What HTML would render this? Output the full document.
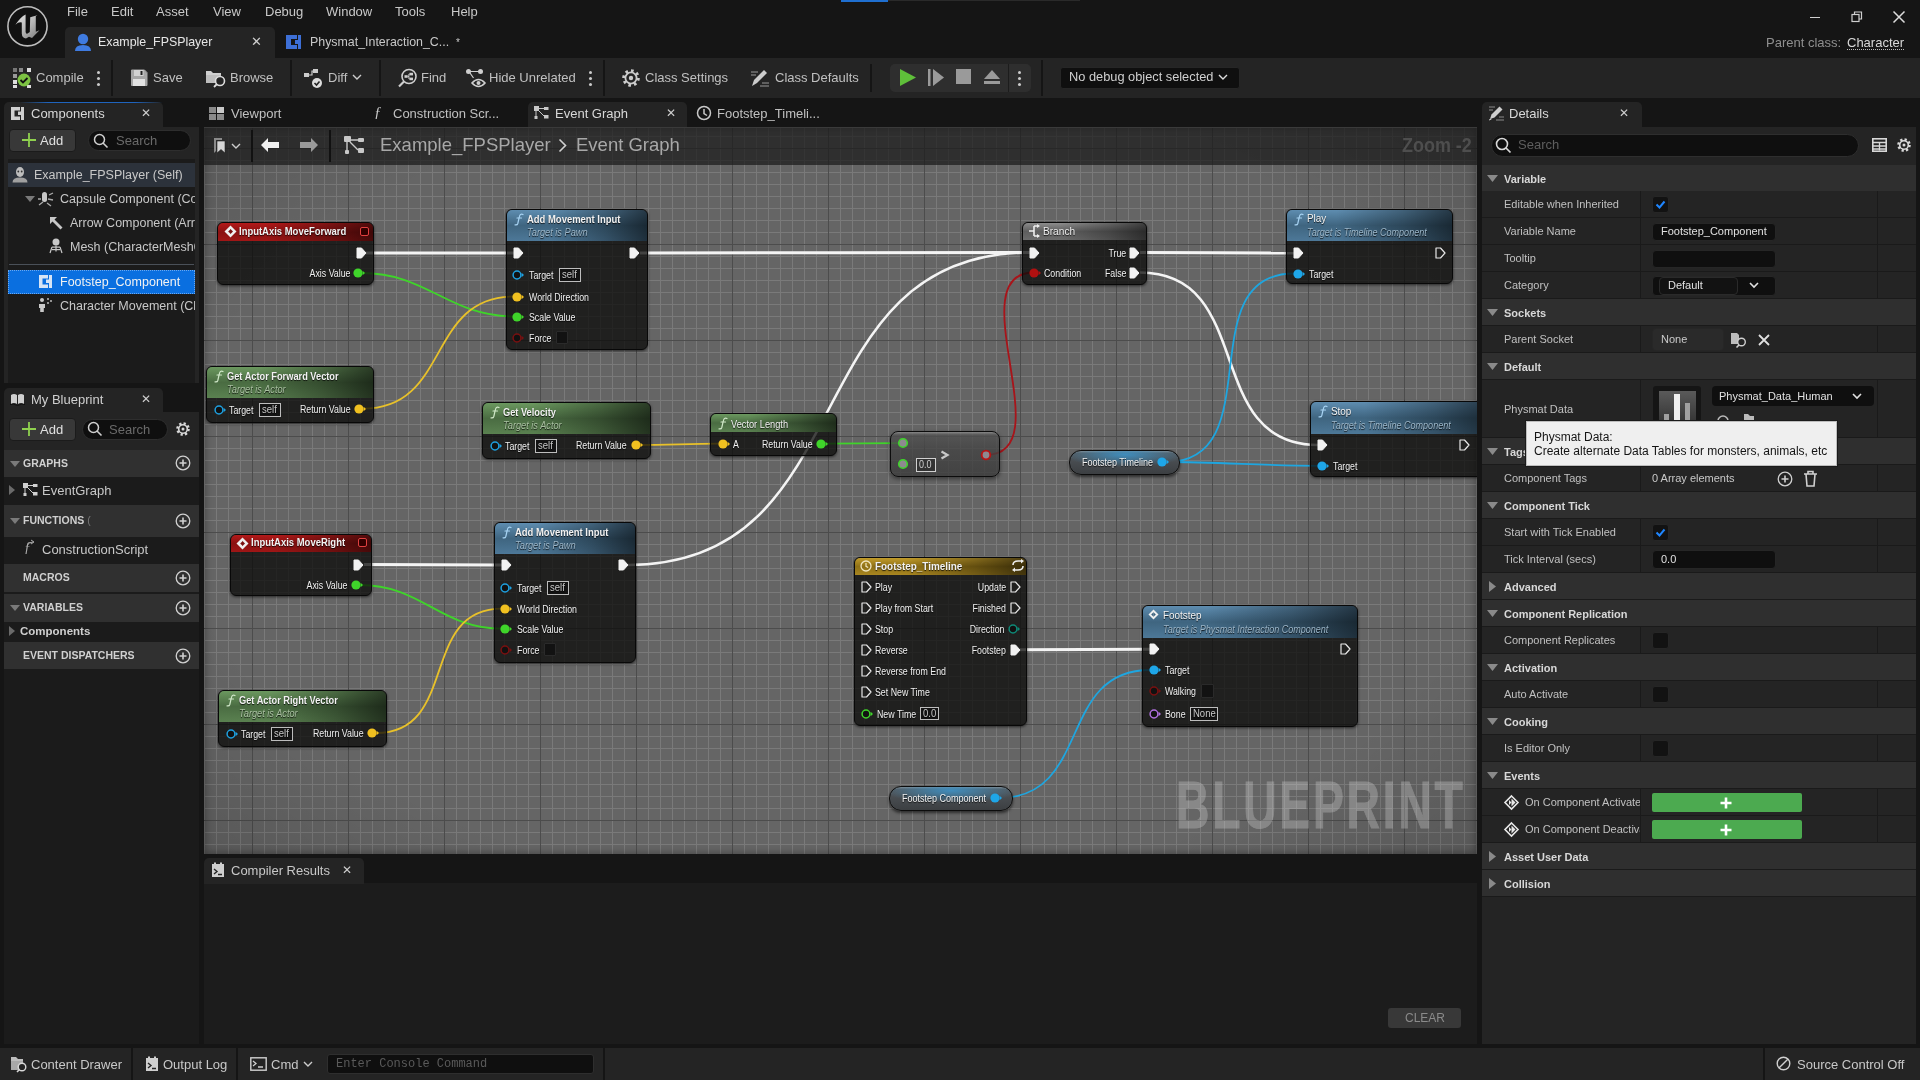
<!DOCTYPE html>
<html><head><meta charset="utf-8">
<style>
*{box-sizing:border-box;margin:0;padding:0}
#root{position:absolute;left:0;top:0;width:1920px;height:1080px;overflow:hidden;will-change:transform}
html,body{width:1920px;height:1080px;overflow:hidden;background:#151515;font-family:"Liberation Sans",sans-serif;color:#c0c0c0}
.a{position:absolute}
.t{position:absolute;white-space:nowrap;line-height:1}
svg{position:absolute;overflow:visible}
.menu{top:5px;font-size:13px;color:#c8c8c8}
.tb{font-size:13px;color:#c0c0c0;top:71px}
.sep{position:absolute;width:2px;background:#151515}
.ptab{font-size:13px;color:#c0c0c0}
/* details */
.drow{position:absolute;left:1482px;width:434px;height:27px;background:#242424;border-bottom:1px solid #151515}
.dhdr{position:absolute;left:1482px;width:434px;height:27px;background:#2f2f2f;border-bottom:1px solid #151515}
.dl{position:absolute;left:22px;top:8px;font-size:11px;color:#c0c0c0;white-space:nowrap;line-height:1}
.dh{position:absolute;left:22px;top:8px;font-size:11px;font-weight:bold;color:#d8d8d8;white-space:nowrap;line-height:1}
.tri-d{position:absolute;left:5px;top:11px;width:0;height:0;border-left:5px solid transparent;border-right:5px solid transparent;border-top:6px solid #8a8a8a}
.tri-r{position:absolute;left:6px;top:8px;width:0;height:0;border-top:5px solid transparent;border-bottom:5px solid transparent;border-left:6px solid #8a8a8a}
.vsep{position:absolute;top:0;width:1px;height:27px;background:#151515}
.chk{position:absolute;width:16px;height:16px;background:#121212;border:1px solid #2a2a2a;border-radius:2px}
.inp{position:absolute;background:#0f0f0f;border:1px solid #2a2a2a;border-radius:4px}
.node{border-radius:6px;background:rgba(10,11,9,.76);border:1px solid #080808;box-shadow:0 1px 3px rgba(0,0,0,.6)}
.nl{text-shadow:0 1px 1px rgba(0,0,0,.8)}
.var{border-radius:12px;border:1.5px solid #0c0c0c;background:radial-gradient(ellipse 55% 55% at 50% 15%,rgba(60,150,205,.85),rgba(60,150,205,0) 100%),linear-gradient(180deg,#8c8c8c 0,#55595d 9%,#474b4f 50%,#3c3f42 100%);box-shadow:0 2px 3px rgba(0,0,0,.55)}
</style></head><body><div id="root">

<!-- ===== TITLE / MENU BAR ===== -->
<svg style="left:6px;top:5px" width="44" height="44" viewBox="0 0 44 44">
 <defs><linearGradient id="ug" x1="0" y1="0" x2="1" y2="1"><stop offset="0" stop-color="#e6e6e6"/><stop offset=".5" stop-color="#b8b8b8"/><stop offset="1" stop-color="#7a7a7a"/></linearGradient></defs>
 <circle cx="21.5" cy="21.3" r="19.6" fill="#111" stroke="#bdbdbd" stroke-width="1.6"/>
 <path d="M9.4 19.7Q13 16.5 15.8 17.6L15.8 28.5Q16 33 20 33.6L23 31.8L26 33L33.5 25.2L29.8 26.8L29.8 11.3Q30.8 10.6 31.4 10.2L24.2 12.2L23.8 27L20.8 29L19.6 27.2L19.6 9.5Q14.5 12 9.4 19.7z" fill="url(#ug)"/>
</svg>
<div class="t menu" style="left:67px">File</div>
<div class="t menu" style="left:111px">Edit</div>
<div class="t menu" style="left:156px">Asset</div>
<div class="t menu" style="left:213px">View</div>
<div class="t menu" style="left:265px">Debug</div>
<div class="t menu" style="left:326px">Window</div>
<div class="t menu" style="left:395px">Tools</div>
<div class="t menu" style="left:451px">Help</div>
<div class="a" style="left:841px;top:0;width:47px;height:2px;background:#1f6fd0"></div>
<div class="a" style="left:888px;top:0;width:192px;height:1px;background:#2a2a2a"></div>

<!-- doc tabs -->
<div class="a" style="left:65px;top:27px;width:210px;height:31px;background:#242424;border-radius:5px 5px 0 0"></div>
<svg style="left:74px;top:32px" width="18" height="20" viewBox="0 0 18 20"><circle cx="9" cy="7" r="5.2" fill="#3f7be0"/><path d="M1 19 q0 -6 8 -6 q8 0 8 6 z" fill="#3f7be0"/></svg>
<div class="t" style="left:98px;top:36px;font-size:12.4px;color:#e6e6e6">Example_FPSPlayer</div>
<div class="t" style="left:251px;top:35px;font-size:13px;color:#d0d0d0">✕</div>
<svg style="left:285px;top:34px" width="17" height="16" viewBox="0 0 17 16"><path d="M1 1h11v4h-6v6h6v4h-11z" fill="#3d6fd6"/><rect x="13" y="1" width="3" height="14" fill="#3d6fd6"/><rect x="10" y="6" width="4" height="4" fill="#3d6fd6"/></svg>
<div class="t" style="left:310px;top:36px;font-size:12.4px;color:#c8c8c8">Physmat_Interaction_C...</div>
<div class="t" style="left:456px;top:38px;font-size:10px;color:#c8c8c8">*</div>

<!-- window controls -->
<div class="a" style="left:1810px;top:17px;width:10px;height:1px;background:#cfcfcf"></div>
<svg style="left:1851px;top:11px" width="12" height="12" viewBox="0 0 12 12"><rect x="1" y="3.5" width="7" height="7" fill="none" stroke="#cfcfcf" stroke-width="1.2"/><path d="M3.5 3.5v-2.5h7v7h-2.5" fill="none" stroke="#cfcfcf" stroke-width="1.2"/></svg>
<svg style="left:1893px;top:11px" width="12" height="12" viewBox="0 0 12 12"><path d="M0.5 0.5l11 11M11.5 0.5l-11 11" stroke="#dcdcdc" stroke-width="1.5"/></svg>
<div class="t" style="left:1766px;top:36px;font-size:13px;color:#8f8f8f">Parent class:</div>
<div class="t" style="left:1847px;top:36px;font-size:13px;color:#d8d8d8">Character</div>
<div class="a" style="left:1847px;top:49px;width:57px;height:0;border-bottom:1px dotted #bbb"></div>

<!-- ===== TOOLBAR ===== -->
<div class="a" style="left:0;top:58px;width:1920px;height:40px;background:#242424"></div>

<!-- compile icon -->
<svg style="left:12px;top:67px" width="22" height="22" viewBox="0 0 22 22">
 <rect x="1" y="1" width="4" height="4" fill="#777"/><rect x="7" y="1" width="4" height="4" fill="#888"/><rect x="15" y="1" width="4" height="4" fill="#ddd"/>
 <rect x="1" y="7" width="4" height="4" fill="#999"/><rect x="1" y="13" width="4" height="4" fill="#ddd"/><rect x="1" y="18" width="4" height="3" fill="#ddd"/><rect x="15" y="18" width="4" height="3" fill="#ddd"/>
 <circle cx="12" cy="13" r="6.5" fill="#7cc242"/><path d="M8.5 13l2.5 2.5l4.5 -4.5" fill="none" stroke="#111" stroke-width="1.8"/>
</svg>
<div class="t tb" style="left:36px">Compile</div>
<div class="a" style="left:97px;top:71px;width:3px;height:3px;border-radius:2px;background:#ccc;box-shadow:0 6px 0 #ccc,0 12px 0 #ccc"></div>
<div class="sep" style="left:111px;top:60px;height:36px"></div>
<svg style="left:130px;top:69px" width="18" height="18" viewBox="0 0 18 18"><path d="M1.5 1h13l2.5 2.5v13h-15.5z" fill="#a6a6a6" stroke="#a6a6a6" stroke-linejoin="round"/><rect x="4" y="1" width="9.5" height="6" fill="#d2d2d2"/><rect x="10.5" y="2" width="2" height="4" fill="#222"/><rect x="3" y="10" width="12" height="7" fill="#e2e2e2"/></svg>
<div class="t tb" style="left:153px">Save</div>
<svg style="left:205px;top:68px" width="23" height="20" viewBox="0 0 23 20"><path d="M1 3h5l2 2h8v5h-15z" fill="#cfcfcf"/><path d="M1 7h15v8h-15z" fill="#bdbdbd"/><circle cx="15" cy="13" r="4.5" fill="#242424" stroke="#ddd" stroke-width="1.6"/><path d="M12 16l-3 3" stroke="#ddd" stroke-width="1.8"/></svg>
<div class="t tb" style="left:230px">Browse</div>
<div class="sep" style="left:290px;top:60px;height:36px"></div>
<svg style="left:303px;top:68px" width="22" height="21" viewBox="0 0 22 21"><rect x="1" y="5" width="5" height="4" fill="#ccc"/><rect x="10" y="1" width="5" height="4" fill="#ccc"/><path d="M6 7h3v-4h1" stroke="#ccc" fill="none" stroke-width="1.2"/><circle cx="14" cy="15" r="5" fill="#ddd"/><path d="M11.5 15l2 2l3 -3.5" stroke="#242424" fill="none" stroke-width="1.6"/></svg>
<div class="t tb" style="left:328px">Diff</div>
<svg style="left:352px;top:74px" width="10" height="6" viewBox="0 0 10 6"><path d="M1 1l4 4l4 -4" stroke="#ccc" fill="none" stroke-width="1.4"/></svg>
<div class="sep" style="left:379px;top:60px;height:36px"></div>
<svg style="left:397px;top:68px" width="21" height="21" viewBox="0 0 21 21"><circle cx="12" cy="8.5" r="7" fill="none" stroke="#cfcfcf" stroke-width="1.6"/><path d="M7 13.5l-5 5" stroke="#cfcfcf" stroke-width="2.2"/><rect x="7.5" y="7.2" width="3.2" height="2.6" fill="#cfcfcf"/><rect x="12.5" y="4.8" width="3.5" height="2.6" fill="#cfcfcf"/><rect x="12.5" y="9.6" width="3.5" height="2.6" fill="#cfcfcf"/><path d="M10.7 8.5h1.2v-2.4h.6M11.9 8.5v2.4h.6" stroke="#cfcfcf" stroke-width="1" fill="none"/></svg>
<div class="t tb" style="left:421px">Find</div>
<svg style="left:465px;top:68px" width="22" height="21" viewBox="0 0 22 21"><circle cx="3.5" cy="3.5" r="2.5" fill="#cfcfcf"/><circle cx="15.5" cy="3.5" r="2.5" fill="#cfcfcf"/><path d="M3.5 3.5h12M5 5l3.5 5" stroke="#cfcfcf" stroke-width="1.2"/><path d="M7 15q6.5 -7 13 0q-6.5 7 -13 0z" fill="none" stroke="#cfcfcf" stroke-width="1.6"/><circle cx="13.5" cy="15" r="2" fill="#cfcfcf"/></svg>
<div class="t tb" style="left:489px">Hide Unrelated</div>
<div class="a" style="left:589px;top:71px;width:3px;height:3px;border-radius:2px;background:#ccc;box-shadow:0 6px 0 #ccc,0 12px 0 #ccc"></div>
<div class="sep" style="left:603px;top:60px;height:36px"></div>
<svg style="left:621px;top:68px" width="20" height="20" viewBox="0 0 20 20"><circle cx="10" cy="10" r="7.3" fill="none" stroke="#ccc" stroke-width="3" stroke-dasharray="2.6 3.1"/><circle cx="10" cy="10" r="5.6" fill="none" stroke="#ccc" stroke-width="1.8"/><circle cx="10" cy="10" r="2.2" fill="#ccc"/></svg>
<div class="t tb" style="left:645px">Class Settings</div>
<svg style="left:750px;top:68px" width="20" height="20" viewBox="0 0 20 20"><path d="M2 18l2 -6l10 -10l3 3l-10 10z" fill="#ccc"/><path d="M1 4h7M1 7h5M10 18h9M12 15h7" stroke="#999" stroke-width="1"/></svg>
<div class="t tb" style="left:775px">Class Defaults</div>
<div class="sep" style="left:870px;top:64px;height:28px"></div>
<div class="a" style="left:890px;top:64px;width:141px;height:28px;background:#2e2e2e;border-radius:5px"></div>
<div class="a" style="left:1008px;top:64px;width:1px;height:28px;background:#1c1c1c"></div>
<svg style="left:899px;top:68px" width="18" height="19" viewBox="0 0 18 19"><path d="M1 1l16 8.5l-16 8.5z" fill="#5fbf3a"/></svg>
<svg style="left:927px;top:68px" width="18" height="19" viewBox="0 0 18 19"><rect x="1" y="1" width="2.5" height="17" fill="#9a9a9a"/><path d="M6 1l11 8.5l-11 8.5z" fill="#9a9a9a"/></svg>
<div class="a" style="left:956px;top:69px;width:15px;height:15px;background:#9a9a9a"></div>
<svg style="left:983px;top:69px" width="18" height="17" viewBox="0 0 18 17"><path d="M9 1l8 9h-16z" fill="#9a9a9a"/><rect x="1" y="12" width="16" height="3" fill="#9a9a9a"/></svg>
<div class="a" style="left:1018px;top:71px;width:3px;height:3px;border-radius:2px;background:#ccc;box-shadow:0 6px 0 #ccc,0 12px 0 #ccc"></div>
<div class="sep" style="left:1041px;top:60px;height:36px"></div>
<div class="a" style="left:1060px;top:67px;width:180px;height:22px;background:#0f0f0f;border:1px solid #262626;border-radius:3px"></div>
<div class="t" style="left:1069px;top:71px;font-size:12.8px;color:#d0d0d0">No debug object selected</div>
<svg style="left:1218px;top:74px" width="10" height="6" viewBox="0 0 10 6"><path d="M1 1l4 4l4 -4" stroke="#ddd" fill="none" stroke-width="1.4"/></svg>


<!-- ===== PANEL TAB STRIP ===== -->

<!-- ===== LEFT: COMPONENTS ===== -->
<div class="a" style="left:4px;top:102px;width:159px;height:26px;background:#242424;border-radius:5px 5px 0 0"></div>
<div class="a" style="left:20px;top:102px;width:143px;height:1px;background:linear-gradient(90deg,rgba(31,100,190,0),#1f64be 20%,#1f64be 80%,rgba(31,100,190,0))"></div>
<svg style="left:10px;top:106px" width="15" height="15" viewBox="0 0 15 15"><path d="M1 1h9v3.5h-5.5v6h5.5v3.5h-9z" fill="#cfcfcf"/><rect x="11" y="1" width="3" height="13" fill="#cfcfcf"/><rect x="8" y="5.5" width="4" height="3.5" fill="#cfcfcf"/></svg>
<div class="t ptab" style="left:31px;top:107px;color:#d8d8d8">Components</div>
<div class="t" style="left:141px;top:107px;font-size:12px;color:#cfcfcf">✕</div>
<div class="a" style="left:4px;top:127px;width:195px;height:256px;background:#242424"></div>
<div class="a" style="left:9px;top:129px;width:67px;height:23px;background:#383838;border:1px solid #1b1b1b;border-radius:4px"></div>
<svg style="left:22px;top:133px" width="14" height="14" viewBox="0 0 14 14"><path d="M7 0v14M0 7h14" stroke="#8fd14f" stroke-width="1.8"/></svg>
<div class="t" style="left:40px;top:134px;font-size:13px;color:#e0e0e0">Add</div>
<div class="a" style="left:88px;top:130px;width:103px;height:21px;background:#0f0f0f;border:1px solid #2e2e2e;border-radius:11px"></div>
<svg style="left:93px;top:133px" width="16" height="16" viewBox="0 0 16 16"><circle cx="6.5" cy="6.5" r="5" fill="none" stroke="#d0d0d0" stroke-width="1.5"/><path d="M10 10l4.5 4.5" stroke="#d0d0d0" stroke-width="1.6"/></svg>
<div class="t" style="left:116px;top:134px;font-size:13px;color:#6a6a6a">Search</div>
<div class="a" style="left:8px;top:159px;width:187px;height:224px;background:#1b1b1b"></div>
<div class="a" style="left:8px;top:163px;width:187px;height:24px;background:#2c323b"></div>
<svg style="left:12px;top:166px" width="16" height="17" viewBox="0 0 16 17"><ellipse cx="8" cy="6" rx="4" ry="5" fill="#bdbdbd"/><path d="M0.5 16.5q0 -5 7.5 -5q7.5 0 7.5 5z" fill="#a0a0a0"/><circle cx="6.3" cy="5.5" r="0.9" fill="#333"/><circle cx="9.7" cy="5.5" r="0.9" fill="#333"/></svg>
<div class="t" style="left:34px;top:169px;font-size:12.5px;color:#c8c8c8">Example_FPSPlayer (Self)</div>
<svg style="left:25px;top:196px" width="10" height="6" viewBox="0 0 10 6"><path d="M0 0h10l-5 6z" fill="#7a7a7a"/></svg>
<svg style="left:38px;top:191px" width="16" height="16" viewBox="0 0 16 16"><rect x="4" y="1" width="5" height="10" rx="2.5" fill="#c8c8c8"/><path d="M1 14l4 -3M11 4l4 -2M10 8l5 1M9 12l4 3M0 8h3" stroke="#aaa" stroke-width="1.3"/></svg>
<div class="t" style="left:60px;top:193px;font-size:12.5px;color:#c8c8c8;width:135px;overflow:hidden">Capsule Component (CollisionCylinder)</div>
<svg style="left:48px;top:215px" width="16" height="15" viewBox="0 0 16 15"><path d="M2 2h7l-2.5 2.5l8 8l-2 2l-8 -8l-2.5 2.5z" fill="#c8c8c8"/></svg>
<div class="t" style="left:70px;top:217px;font-size:12.5px;color:#c8c8c8;width:125px;overflow:hidden">Arrow Component (Arrow)</div>
<svg style="left:49px;top:238px" width="14" height="16" viewBox="0 0 14 16"><circle cx="7" cy="4" r="3.5" fill="#c8c8c8"/><rect x="3" y="8.5" width="8" height="1.2" fill="#c8c8c8"/><rect x="3" y="11" width="8" height="1.2" fill="#c8c8c8"/><rect x="6.4" y="7.5" width="1.2" height="6" fill="#c8c8c8"/><path d="M1 15l2 -6M13 15l-2 -6" stroke="#c8c8c8" stroke-width="1.2"/></svg>
<div class="t" style="left:70px;top:241px;font-size:12.5px;color:#c8c8c8;width:125px;overflow:hidden">Mesh (CharacterMesh0)</div>
<div class="a" style="left:9px;top:264px;width:185px;height:1px;background:#4a5058"></div>
<div class="a" style="left:8px;top:270px;width:187px;height:24px;background:#0a6fe0;border:1px dotted #6aa8f0"></div>
<svg style="left:38px;top:274px" width="15" height="15" viewBox="0 0 15 15"><path d="M1 1h9v3.5h-5.5v6h5.5v3.5h-9z" fill="#d6e4f5"/><rect x="11" y="1" width="3" height="13" fill="#d6e4f5"/><rect x="8" y="5.5" width="4" height="3.5" fill="#d6e4f5"/></svg>
<div class="t" style="left:60px;top:276px;font-size:12.5px;color:#f2f2f2">Footstep_Component</div>
<svg style="left:37px;top:297px" width="16" height="16" viewBox="0 0 16 16"><circle cx="5" cy="3" r="2" fill="#c8c8c8"/><path d="M2 7h6v4h-1.2v4h-3.6v-4h-1.2z" fill="#c8c8c8"/><circle cx="11" cy="2" r="1" fill="#bbb"/><circle cx="14" cy="4" r="1" fill="#bbb"/><circle cx="11" cy="6" r="1" fill="#bbb"/></svg>
<div class="t" style="left:60px;top:300px;font-size:12.5px;color:#c8c8c8;width:135px;overflow:hidden">Character Movement (CharMoveComp)</div>

<!-- ===== LEFT: MY BLUEPRINT ===== -->
<div class="a" style="left:4px;top:388px;width:159px;height:25px;background:#242424;border-radius:5px 5px 0 0"></div>
<svg style="left:10px;top:392px" width="15" height="14" viewBox="0 0 15 14"><path d="M1 3q3 -2 6 0v9q-3 -2 -6 0z M8 3q3 -2 6 0v9q-3 -2 -6 0z" fill="#cfcfcf"/><path d="M0 12.5q3.5 -1 7.5 1q4 -2 7.5 -1" stroke="#111" fill="none"/></svg>
<div class="t ptab" style="left:31px;top:393px;color:#d0d0d0">My Blueprint</div>
<div class="t" style="left:141px;top:393px;font-size:12px;color:#cfcfcf">✕</div>
<div class="a" style="left:4px;top:412px;width:195px;height:632px;background:#1b1b1b"></div>
<div class="a" style="left:4px;top:412px;width:195px;height:38px;background:#242424"></div>
<div class="a" style="left:9px;top:418px;width:67px;height:23px;background:#383838;border:1px solid #1b1b1b;border-radius:4px"></div>
<svg style="left:22px;top:422px" width="14" height="14" viewBox="0 0 14 14"><path d="M7 0v14M0 7h14" stroke="#8fd14f" stroke-width="1.8"/></svg>
<div class="t" style="left:40px;top:423px;font-size:13px;color:#e0e0e0">Add</div>
<div class="a" style="left:82px;top:419px;width:86px;height:21px;background:#0f0f0f;border:1px solid #2e2e2e;border-radius:11px"></div>
<svg style="left:87px;top:421px" width="16" height="16" viewBox="0 0 16 16"><circle cx="6.5" cy="6.5" r="5" fill="none" stroke="#d0d0d0" stroke-width="1.5"/><path d="M10 10l4.5 4.5" stroke="#d0d0d0" stroke-width="1.6"/></svg>
<div class="t" style="left:109px;top:423px;font-size:13px;color:#6a6a6a">Search</div>
<svg style="left:175px;top:421px" width="16" height="16" viewBox="0 0 16 16"><circle cx="8" cy="8" r="5.5" fill="none" stroke="#d8d8d8" stroke-width="2.6" stroke-dasharray="2.2 2.1"/><circle cx="8" cy="8" r="4.3" fill="none" stroke="#d8d8d8" stroke-width="1.6"/><circle cx="8" cy="8" r="1.5" fill="#d8d8d8"/></svg>

<div class="a" style="left:4px;top:450px;width:195px;height:27px;background:#303030"></div>
<svg style="left:10px;top:461px" width="10" height="6" viewBox="0 0 10 6"><path d="M0 0h10l-5 6z" fill="#7a7a7a"/></svg>
<div class="t" style="left:23px;top:458px;font-size:10.5px;font-weight:bold;color:#d0d0d0">GRAPHS</div>
<svg style="left:175px;top:455px" width="16" height="16" viewBox="0 0 16 16"><circle cx="8" cy="8" r="6.8" fill="none" stroke="#d0d0d0" stroke-width="1.3"/><path d="M8 4.5v7M4.5 8h7" stroke="#d0d0d0" stroke-width="1.6"/></svg>
<svg style="left:9px;top:485px" width="6" height="10" viewBox="0 0 6 10"><path d="M0 0v10l6 -5z" fill="#6a6a6a"/></svg>
<svg style="left:23px;top:483px" width="15" height="14" viewBox="0 0 15 14"><rect x="0" y="0" width="5" height="5" fill="#d0d0d0"/><rect x="10" y="1" width="4.5" height="3" fill="#d0d0d0"/><rect x="0.5" y="10" width="3" height="3" fill="#d0d0d0"/><rect x="10" y="9" width="4.5" height="3.5" fill="#d0d0d0"/><path d="M5 2.5h5M2 5v5M4 4l6 6" stroke="#d0d0d0" stroke-width="1"/></svg>
<div class="t" style="left:42px;top:484px;font-size:13px;color:#c8c8c8">EventGraph</div>

<div class="a" style="left:4px;top:505px;width:195px;height:32px;background:#303030"></div>
<svg style="left:10px;top:518px" width="10" height="6" viewBox="0 0 10 6"><path d="M0 0h10l-5 6z" fill="#7a7a7a"/></svg>
<div class="t" style="left:23px;top:515px;font-size:10.5px;font-weight:bold;color:#d0d0d0">FUNCTIONS <span style="font-weight:normal;color:#777">(</span></div>
<svg style="left:175px;top:513px" width="16" height="16" viewBox="0 0 16 16"><circle cx="8" cy="8" r="6.8" fill="none" stroke="#d0d0d0" stroke-width="1.3"/><path d="M8 4.5v7M4.5 8h7" stroke="#d0d0d0" stroke-width="1.6"/></svg>
<div class="t" style="left:24px;top:541px;font-size:14px;font-style:italic;font-family:'Liberation Serif';color:#aaa">ƒ</div>
<svg style="left:26px;top:540px" width="10" height="7" viewBox="0 0 10 7"><path d="M1 6q1 -4 6 -4M5 0l3 2l-3 2" stroke="#aaa" fill="none" stroke-width="1"/></svg>
<div class="t" style="left:42px;top:543px;font-size:13px;color:#c8c8c8">ConstructionScript</div>

<div class="a" style="left:4px;top:564px;width:195px;height:28px;background:#303030"></div>
<div class="t" style="left:23px;top:572px;font-size:10.5px;font-weight:bold;color:#d0d0d0">MACROS</div>
<svg style="left:175px;top:570px" width="16" height="16" viewBox="0 0 16 16"><circle cx="8" cy="8" r="6.8" fill="none" stroke="#d0d0d0" stroke-width="1.3"/><path d="M8 4.5v7M4.5 8h7" stroke="#d0d0d0" stroke-width="1.6"/></svg>
<div class="a" style="left:4px;top:594px;width:195px;height:28px;background:#303030"></div>
<svg style="left:10px;top:605px" width="10" height="6" viewBox="0 0 10 6"><path d="M0 0h10l-5 6z" fill="#7a7a7a"/></svg>
<div class="t" style="left:23px;top:602px;font-size:10.5px;font-weight:bold;color:#d0d0d0">VARIABLES</div>
<svg style="left:175px;top:600px" width="16" height="16" viewBox="0 0 16 16"><circle cx="8" cy="8" r="6.8" fill="none" stroke="#d0d0d0" stroke-width="1.3"/><path d="M8 4.5v7M4.5 8h7" stroke="#d0d0d0" stroke-width="1.6"/></svg>
<svg style="left:9px;top:626px" width="6" height="10" viewBox="0 0 6 10"><path d="M0 0v10l6 -5z" fill="#6a6a6a"/></svg>
<div class="t" style="left:20px;top:626px;font-size:11.5px;font-weight:bold;color:#d0d0d0">Components</div>
<div class="a" style="left:4px;top:642px;width:195px;height:27px;background:#303030"></div>
<div class="t" style="left:23px;top:650px;font-size:10.5px;font-weight:bold;color:#d0d0d0">EVENT DISPATCHERS</div>
<svg style="left:175px;top:648px" width="16" height="16" viewBox="0 0 16 16"><circle cx="8" cy="8" r="6.8" fill="none" stroke="#d0d0d0" stroke-width="1.3"/><path d="M8 4.5v7M4.5 8h7" stroke="#d0d0d0" stroke-width="1.6"/></svg>

<!-- ===== GRAPH PANEL TABS ===== -->
<svg style="left:209px;top:107px" width="15" height="13" viewBox="0 0 15 13"><rect x="0" y="0" width="7" height="6" fill="#8a8a8a"/><rect x="8" y="0" width="7" height="6" fill="#c8c8c8"/><rect x="0" y="7" width="7" height="6" fill="#8a8a8a"/><rect x="8" y="7" width="7" height="6" fill="#8a8a8a"/></svg>
<div class="t ptab" style="left:231px;top:107px">Viewport</div>
<div class="t" style="left:374px;top:105px;font-size:15px;font-style:italic;font-family:'Liberation Serif';color:#c8c8c8">ƒ</div>
<div class="t ptab" style="left:393px;top:107px">Construction Scr...</div>
<div class="a" style="left:528px;top:102px;width:159px;height:26px;background:#242424;border-radius:5px 5px 0 0"></div>
<svg style="left:534px;top:106px" width="15" height="14" viewBox="0 0 15 14"><rect x="0" y="0" width="5" height="5" fill="#c8c8c8"/><rect x="10" y="1" width="4.5" height="3" fill="#c8c8c8"/><rect x="0.5" y="10" width="3" height="3" fill="#c8c8c8"/><rect x="10" y="9" width="4.5" height="3.5" fill="#c8c8c8"/><path d="M5 2.5h5M2 5v5M4 4l6 6" stroke="#c8c8c8" stroke-width="1"/></svg>
<div class="t ptab" style="left:555px;top:107px;color:#d8d8d8">Event Graph</div>
<div class="t" style="left:666px;top:107px;font-size:12px;color:#cfcfcf">✕</div>
<svg style="left:696px;top:105px" width="16" height="16" viewBox="0 0 16 16"><circle cx="8" cy="8" r="6.5" fill="none" stroke="#c8c8c8" stroke-width="1.5"/><path d="M8 4v4.5l3 2" stroke="#c8c8c8" fill="none" stroke-width="1.5"/></svg>
<div class="t ptab" style="left:717px;top:107px">Footstep_Timeli...</div>

<div class="a" id="gph" style="left:204px;top:127px;width:1273px;height:727px;overflow:hidden;background-color:#656565;background-image:linear-gradient(90deg,#4c4c4c 1px,transparent 1px),linear-gradient(180deg,#4c4c4c 1px,transparent 1px),linear-gradient(90deg,#7a7a7a 1px,transparent 1px),linear-gradient(180deg,#7a7a7a 1px,transparent 1px);background-size:96px 96px,96px 96px,12px 12px,12px 12px;background-position:48px 0,0 21px,0 0,0 9px">
<div class="a" style="left:0;top:0;width:100%;height:100%;background:radial-gradient(ellipse 80% 85% at 50% 50%,rgba(0,0,0,0) 65%,rgba(0,0,0,.22) 100%)"></div>
<div class="a" style="left:0;top:0;width:100%;height:100%;box-shadow:inset 0 0 8px rgba(0,0,0,.4)"></div>
<div class="t" style="left:972px;top:645px;font-size:66px;font-weight:bold;color:#d8d8d8;-webkit-text-stroke:1px #d8d8d8;opacity:.31;transform:scaleX(.70);transform-origin:0 0;letter-spacing:4px">BLUEPRINT</div>
</div>
<svg style="left:0;top:0;clip-path:inset(127px 443px 226px 204px)" width="1920" height="1080" viewBox="0 0 1920 1080"><path d="M366 253 C415.3333333333333 253 464.6666666666667 253 514 253" stroke="#f4f4f4" stroke-width="3" fill="none"/><path d="M640 253 C770.1666666666666 253 899.8333333333334 252.5 1030 252.5" stroke="#f4f4f4" stroke-width="3" fill="none"/><path d="M1140 252.5 C1191.5 252.5 1242.5 253 1294 253" stroke="#f4f4f4" stroke-width="3" fill="none"/><path d="M1140 272.5 C1256.8333333333333 272.5 1201.1666666666667 445 1318 445" stroke="#f4f4f4" stroke-width="2.6" fill="none"/><path d="M364 564.5 C410.1666666666667 564.5 455.8333333333333 565 502 565" stroke="#f4f4f4" stroke-width="3" fill="none"/><path d="M628 565 C866.1666666666666 565 791.8333333333334 252.5 1030 252.5" stroke="#f4f4f4" stroke-width="2.6" fill="none"/><path d="M1020 649.8 C1063.5 649.8 1106.5 649.3 1150 649.3" stroke="#f4f4f4" stroke-width="3" fill="none"/><path d="M362 273 C427.1666666666667 273 448.8333333333333 316.5 514 316.5" stroke="#3fd42a" stroke-width="1.8" fill="none"/><path d="M363 408.7 C450.73333333333335 408.7 426.26666666666665 296.5 514 296.5" stroke="#e8c12a" stroke-width="1.8" fill="none"/><path d="M640 445 C666.4333333333334 445 691.5666666666666 443.7 718 443.7" stroke="#e8c12a" stroke-width="1.8" fill="none"/><path d="M826 443.7 C850.5 443.7 874.5 443.2 899 443.2" stroke="#3fd42a" stroke-width="1.8" fill="none"/><path d="M986 455 C1062.8333333333333 455 957.1666666666666 272.5 1034 272.5" stroke="#a8141a" stroke-width="1.8" fill="none"/><path d="M1166 462 C1271.5 462 1188.5 273.5 1294 273.5" stroke="#1ea6e0" stroke-width="1.8" fill="none"/><path d="M1166 462 C1217.9333333333334 462 1266.0666666666666 465.8 1318 465.8" stroke="#1ea6e0" stroke-width="1.8" fill="none"/><path d="M360 585 C421.90000000000003 585 440.09999999999997 628.7 502 628.7" stroke="#3fd42a" stroke-width="1.8" fill="none"/><path d="M376 733 C459.43333333333334 733 418.56666666666666 608.7 502 608.7" stroke="#e8c12a" stroke-width="1.8" fill="none"/><path d="M999 798 C1092.0 798 1057.0 670 1150 670" stroke="#1ea6e0" stroke-width="1.8" fill="none"/></svg>
<div class="a" style="left:0;top:0;width:1920px;height:1080px;clip-path:inset(127px 443px 226px 204px)"><div class="a node" style="left:217px;top:222px;width:157px;height:63px"><div class="a" style="left:0;top:0;right:0;height:18px;background:linear-gradient(90deg,rgba(0,0,0,0) 30%,rgba(0,0,0,0.275) 70%,rgba(0,0,0,0.55) 100%),linear-gradient(180deg,#b41a1a 0%,#8a1212 50%,#a01616 100%);border-radius:5px 5px 0 0"></div></div><svg style="left:224px;top:225px" width="13" height="13" viewBox="0 0 13 13"><path d="M6.5 0.5l6 6l-6 6l-6 -6z" fill="#f0f0f0"/><path d="M4.2 6.5l2.8 -2.8v5.6z" fill="#7a1010"/><path d="M7 4.5l2 2l-2 2z" fill="#7a1010"/></svg><div class="t nl" style="left:239px;top:226.45px;font-size:11px;color:#f2f2f2;transform:scaleX(0.86);transform-origin:0 0;font-weight:bold">InputAxis MoveForward</div><div class="a" style="left:360px;top:227px;width:9px;height:9px;border:1.5px solid #e04040;background:#300;border-radius:2px"></div><svg style="left:356px;top:247px" width="11" height="12" viewBox="0 0 11 12"><path d="M1 1h4.5l4.5 5l-4.5 5h-4.5z" fill="#f2f2f2" stroke="#f2f2f2" stroke-width="1" stroke-linejoin="round"/></svg><div class="t nl" style="right:1569px;top:269.0px;font-size:10px;color:#f0f0f0;transform:scaleX(0.88);transform-origin:100% 0;">Axis Value</div><svg style="left:353px;top:268px" width="13" height="10" viewBox="0 0 13 10"><circle cx="5" cy="5" r="4.6" fill="#3fd42a"/><path d="M9.6 2.8l2.4 2.2l-2.4 2.2z" fill="#3fd42a"/></svg><div class="a node" style="left:506px;top:209px;width:142px;height:141px"><div class="a" style="left:0;top:0;right:0;height:31px;background:linear-gradient(90deg,rgba(0,0,0,0) 30%,rgba(0,0,0,0.3) 70%,rgba(0,0,0,0.6) 100%),linear-gradient(180deg,#5e8db0 0%,#3f6580 50%,#4d7898 100%);border-radius:5px 5px 0 0"></div></div><svg style="left:514px;top:213px" width="10" height="13" viewBox="0 0 10 13"><path d="M9 1.5Q7.5 0.5 6.3 1.6Q5.6 2.3 5.2 4.5L3.8 10.5Q3.3 12.3 1 11.8M3 5h4.5" stroke="#a8d4f4" stroke-width="1.2" fill="none" stroke-linecap="round"/></svg><div class="t nl" style="left:527px;top:213.725px;font-size:10.5px;color:#f2f2f2;transform:scaleX(0.9);transform-origin:0 0;font-weight:bold">Add Movement Input</div><div class="t nl" style="left:527px;top:228.0px;font-size:10px;color:#9ab5c8;transform:scaleX(0.92);transform-origin:0 0;font-style:italic">Target is Pawn</div><svg style="left:513px;top:247px" width="11" height="12" viewBox="0 0 11 12"><path d="M1 1h4.5l4.5 5l-4.5 5h-4.5z" fill="#f2f2f2" stroke="#f2f2f2" stroke-width="1" stroke-linejoin="round"/></svg><svg style="left:629px;top:247px" width="11" height="12" viewBox="0 0 11 12"><path d="M1 1h4.5l4.5 5l-4.5 5h-4.5z" fill="#f2f2f2" stroke="#f2f2f2" stroke-width="1" stroke-linejoin="round"/></svg><svg style="left:512px;top:269.5px" width="13" height="10" viewBox="0 0 13 10"><circle cx="5" cy="5" r="3.9" fill="#111" stroke="#1ea0e0" stroke-width="1.5"/><path d="M9.6 2.8l2.4 2.2l-2.4 2.2z" fill="#1ea0e0"/></svg><div class="t nl" style="left:529px;top:270.5px;font-size:10px;color:#f0f0f0;transform:scaleX(0.88);transform-origin:0 0;">Target</div><div class="a" style="left:559px;top:268px;width:22px;height:14px;border:1px solid #bdbdbd;background:#131313"></div><div class="t nl" style="left:562px;top:270.0px;font-size:10px;color:#c8c8c8;transform:scaleX(.95);transform-origin:0 0">self</div><svg style="left:512px;top:291.5px" width="13" height="10" viewBox="0 0 13 10"><circle cx="5" cy="5" r="4.6" fill="#f0c020"/><path d="M9.6 2.8l2.4 2.2l-2.4 2.2z" fill="#f0c020"/></svg><div class="t nl" style="left:529px;top:292.5px;font-size:10px;color:#f0f0f0;transform:scaleX(0.88);transform-origin:0 0;">World Direction</div><svg style="left:512px;top:311.5px" width="13" height="10" viewBox="0 0 13 10"><circle cx="5" cy="5" r="4.6" fill="#3fd42a"/><path d="M9.6 2.8l2.4 2.2l-2.4 2.2z" fill="#3fd42a"/></svg><div class="t nl" style="left:529px;top:312.5px;font-size:10px;color:#f0f0f0;transform:scaleX(0.88);transform-origin:0 0;">Scale Value</div><svg style="left:512px;top:332.5px" width="13" height="10" viewBox="0 0 13 10"><circle cx="5" cy="5" r="3.9" fill="#111" stroke="#7a1010" stroke-width="1.5"/><path d="M9.6 2.8l2.4 2.2l-2.4 2.2z" fill="#7a1010"/></svg><div class="t nl" style="left:529px;top:333.5px;font-size:10px;color:#f0f0f0;transform:scaleX(0.88);transform-origin:0 0;">Force</div><div class="a" style="left:556px;top:331px;width:12px;height:13px;background:#121212;border:1px solid #2a2a2a;border-radius:1px"></div><div class="a node" style="left:1022px;top:222px;width:125px;height:63px"><div class="a" style="left:0;top:0;right:0;height:17px;background:linear-gradient(90deg,rgba(0,0,0,0) 30%,rgba(0,0,0,0.275) 70%,rgba(0,0,0,0.55) 100%),linear-gradient(180deg,#8c8c8c 0%,#5e5e5e 50%,#6c6c6c 100%);border-radius:5px 5px 0 0"></div></div><svg style="left:1028px;top:225px" width="12" height="12" viewBox="0 0 12 12"><path d="M6 1h5M6 11h5M6 1v10M1 6h5" stroke="#eee" stroke-width="1.6" fill="none"/><path d="M9 -1l3 2l-3 2zM9 9l3 2l-3 2z" fill="#eee"/></svg><div class="t nl" style="left:1043px;top:226.45px;font-size:11px;color:#eeeeee;transform:scaleX(0.92);transform-origin:0 0;">Branch</div><svg style="left:1029px;top:246.5px" width="11" height="12" viewBox="0 0 11 12"><path d="M1 1h4.5l4.5 5l-4.5 5h-4.5z" fill="#f2f2f2" stroke="#f2f2f2" stroke-width="1" stroke-linejoin="round"/></svg><svg style="left:1129px;top:246.5px" width="11" height="12" viewBox="0 0 11 12"><path d="M1 1h4.5l4.5 5l-4.5 5h-4.5z" fill="#f2f2f2" stroke="#f2f2f2" stroke-width="1" stroke-linejoin="round"/></svg><svg style="left:1129px;top:266.5px" width="11" height="12" viewBox="0 0 11 12"><path d="M1 1h4.5l4.5 5l-4.5 5h-4.5z" fill="#f2f2f2" stroke="#f2f2f2" stroke-width="1" stroke-linejoin="round"/></svg><svg style="left:1029px;top:268px" width="13" height="10" viewBox="0 0 13 10"><circle cx="5" cy="5" r="4.6" fill="#b01010"/><path d="M9.6 2.8l2.4 2.2l-2.4 2.2z" fill="#b01010"/></svg><div class="t nl" style="left:1044px;top:268.5px;font-size:10px;color:#f0f0f0;transform:scaleX(0.88);transform-origin:0 0;">Condition</div><div class="t nl" style="right:794px;top:248.5px;font-size:10px;color:#f0f0f0;transform:scaleX(0.88);transform-origin:100% 0;">True</div><div class="t nl" style="right:794px;top:269.0px;font-size:10px;color:#f0f0f0;transform:scaleX(0.88);transform-origin:100% 0;">False</div><div class="a node" style="left:1286px;top:209px;width:167px;height:75px"><div class="a" style="left:0;top:0;right:0;height:31px;background:linear-gradient(90deg,rgba(0,0,0,0) 30%,rgba(0,0,0,0.3) 70%,rgba(0,0,0,0.6) 100%),linear-gradient(180deg,#5e8db0 0%,#3f6580 50%,#4d7898 100%);border-radius:5px 5px 0 0"></div></div><svg style="left:1294px;top:213px" width="10" height="13" viewBox="0 0 10 13"><path d="M9 1.5Q7.5 0.5 6.3 1.6Q5.6 2.3 5.2 4.5L3.8 10.5Q3.3 12.3 1 11.8M3 5h4.5" stroke="#a8d4f4" stroke-width="1.2" fill="none" stroke-linecap="round"/></svg><div class="t nl" style="left:1307px;top:213.45px;font-size:11px;color:#f2f2f2;transform:scaleX(0.9);transform-origin:0 0;">Play</div><div class="t nl" style="left:1307px;top:228.0px;font-size:10px;color:#9ab5c8;transform:scaleX(0.9);transform-origin:0 0;font-style:italic">Target is Timeline Component</div><svg style="left:1293px;top:247px" width="11" height="12" viewBox="0 0 11 12"><path d="M1 1h4.5l4.5 5l-4.5 5h-4.5z" fill="#f2f2f2" stroke="#f2f2f2" stroke-width="1" stroke-linejoin="round"/></svg><svg style="left:1435px;top:247px" width="11" height="12" viewBox="0 0 11 12"><path d="M1 1h4.5l4.5 5l-4.5 5h-4.5z" fill="none" stroke="#e8e8e8" stroke-width="1.2" stroke-linejoin="round"/></svg><svg style="left:1293px;top:268.5px" width="13" height="10" viewBox="0 0 13 10"><circle cx="5" cy="5" r="4.6" fill="#1ea6e8"/><path d="M9.6 2.8l2.4 2.2l-2.4 2.2z" fill="#1ea6e8"/></svg><div class="t nl" style="left:1309px;top:269.5px;font-size:10px;color:#f0f0f0;transform:scaleX(0.88);transform-origin:0 0;">Target</div><div class="a node" style="left:206px;top:366px;width:168px;height:57px"><div class="a" style="left:0;top:0;right:0;height:31px;background:linear-gradient(90deg,rgba(0,0,0,0) 30%,rgba(0,0,0,0.3) 70%,rgba(0,0,0,0.6) 100%),linear-gradient(180deg,#6b985f 0%,#4a6c42 50%,#5a8150 100%);border-radius:5px 5px 0 0"></div></div><svg style="left:214px;top:370px" width="10" height="13" viewBox="0 0 10 13"><path d="M9 1.5Q7.5 0.5 6.3 1.6Q5.6 2.3 5.2 4.5L3.8 10.5Q3.3 12.3 1 11.8M3 5h4.5" stroke="#d0e8c8" stroke-width="1.2" fill="none" stroke-linecap="round"/></svg><div class="t nl" style="left:227px;top:370.725px;font-size:10.5px;color:#f2f2f2;transform:scaleX(0.88);transform-origin:0 0;font-weight:bold">Get Actor Forward Vector</div><div class="t nl" style="left:227px;top:385.0px;font-size:10px;color:#a8c0a0;transform:scaleX(0.92);transform-origin:0 0;font-style:italic">Target is Actor</div><svg style="left:214px;top:405px" width="13" height="10" viewBox="0 0 13 10"><circle cx="5" cy="5" r="3.9" fill="#111" stroke="#1ea0e0" stroke-width="1.5"/><path d="M9.6 2.8l2.4 2.2l-2.4 2.2z" fill="#1ea0e0"/></svg><div class="t nl" style="left:229px;top:406.0px;font-size:10px;color:#f0f0f0;transform:scaleX(0.88);transform-origin:0 0;">Target</div><div class="a" style="left:259px;top:403px;width:22px;height:14px;border:1px solid #bdbdbd;background:#131313"></div><div class="t nl" style="left:262px;top:405.0px;font-size:10px;color:#c8c8c8;transform:scaleX(.95);transform-origin:0 0">self</div><div class="t nl" style="right:1569px;top:404.7px;font-size:10px;color:#f0f0f0;transform:scaleX(0.88);transform-origin:100% 0;">Return Value</div><svg style="left:354px;top:403.7px" width="13" height="10" viewBox="0 0 13 10"><circle cx="5" cy="5" r="4.6" fill="#f0c020"/><path d="M9.6 2.8l2.4 2.2l-2.4 2.2z" fill="#f0c020"/></svg><div class="a node" style="left:482px;top:402px;width:169px;height:57px"><div class="a" style="left:0;top:0;right:0;height:31px;background:linear-gradient(90deg,rgba(0,0,0,0) 30%,rgba(0,0,0,0.3) 70%,rgba(0,0,0,0.6) 100%),linear-gradient(180deg,#6b985f 0%,#4a6c42 50%,#5a8150 100%);border-radius:5px 5px 0 0"></div></div><svg style="left:490px;top:406px" width="10" height="13" viewBox="0 0 10 13"><path d="M9 1.5Q7.5 0.5 6.3 1.6Q5.6 2.3 5.2 4.5L3.8 10.5Q3.3 12.3 1 11.8M3 5h4.5" stroke="#d0e8c8" stroke-width="1.2" fill="none" stroke-linecap="round"/></svg><div class="t nl" style="left:503px;top:406.725px;font-size:10.5px;color:#f2f2f2;transform:scaleX(0.88);transform-origin:0 0;font-weight:bold">Get Velocity</div><div class="t nl" style="left:503px;top:421.0px;font-size:10px;color:#a8c0a0;transform:scaleX(0.92);transform-origin:0 0;font-style:italic">Target is Actor</div><svg style="left:490px;top:441px" width="13" height="10" viewBox="0 0 13 10"><circle cx="5" cy="5" r="3.9" fill="#111" stroke="#1ea0e0" stroke-width="1.5"/><path d="M9.6 2.8l2.4 2.2l-2.4 2.2z" fill="#1ea0e0"/></svg><div class="t nl" style="left:505px;top:442.0px;font-size:10px;color:#f0f0f0;transform:scaleX(0.88);transform-origin:0 0;">Target</div><div class="a" style="left:535px;top:439px;width:22px;height:14px;border:1px solid #bdbdbd;background:#131313"></div><div class="t nl" style="left:538px;top:441.0px;font-size:10px;color:#c8c8c8;transform:scaleX(.95);transform-origin:0 0">self</div><div class="t nl" style="right:1293px;top:441.0px;font-size:10px;color:#f0f0f0;transform:scaleX(0.88);transform-origin:100% 0;">Return Value</div><svg style="left:630.5px;top:440px" width="13" height="10" viewBox="0 0 13 10"><circle cx="5" cy="5" r="4.6" fill="#f0c020"/><path d="M9.6 2.8l2.4 2.2l-2.4 2.2z" fill="#f0c020"/></svg><div class="a node" style="left:710px;top:413px;width:127px;height:43px"><div class="a" style="left:0;top:0;right:0;height:18px;background:linear-gradient(90deg,rgba(0,0,0,0) 30%,rgba(0,0,0,0.3) 70%,rgba(0,0,0,0.6) 100%),linear-gradient(180deg,#6b985f 0%,#4a6c42 50%,#5a8150 100%);border-radius:5px 5px 0 0"></div></div><svg style="left:718px;top:417px" width="10" height="13" viewBox="0 0 10 13"><path d="M9 1.5Q7.5 0.5 6.3 1.6Q5.6 2.3 5.2 4.5L3.8 10.5Q3.3 12.3 1 11.8M3 5h4.5" stroke="#d0e8c8" stroke-width="1.2" fill="none" stroke-linecap="round"/></svg><div class="t nl" style="left:731px;top:418.725px;font-size:10.5px;color:#f2f2f2;transform:scaleX(0.88);transform-origin:0 0;">Vector Length</div><svg style="left:717.5px;top:438.7px" width="13" height="10" viewBox="0 0 13 10"><circle cx="5" cy="5" r="4.6" fill="#f0c020"/><path d="M9.6 2.8l2.4 2.2l-2.4 2.2z" fill="#f0c020"/></svg><div class="t nl" style="left:733px;top:439.7px;font-size:10px;color:#f0f0f0;transform:scaleX(0.88);transform-origin:0 0;">A</div><div class="t nl" style="right:1107px;top:439.7px;font-size:10px;color:#f0f0f0;transform:scaleX(0.88);transform-origin:100% 0;">Return Value</div><svg style="left:816px;top:438.7px" width="13" height="10" viewBox="0 0 13 10"><circle cx="5" cy="5" r="4.6" fill="#3fd42a"/><path d="M9.6 2.8l2.4 2.2l-2.4 2.2z" fill="#3fd42a"/></svg><div class="a" style="left:890px;top:431px;width:110px;height:46px;border-radius:8px;border:1.5px solid #0c0c0c;background:linear-gradient(180deg,rgba(140,140,140,.85) 0px,rgba(80,80,80,.8) 3px,rgba(66,66,66,.78) 40%,rgba(58,58,58,.8) 100%);box-shadow:0 2px 4px rgba(0,0,0,.45)"></div><svg style="left:897px;top:437px" width="12" height="12" viewBox="0 0 12 12"><circle cx="6" cy="6" r="4.3" fill="#8e8a90" stroke="#3fd42a" stroke-width="1.6"/></svg><svg style="left:897px;top:458px" width="12" height="12" viewBox="0 0 12 12"><circle cx="6" cy="6" r="4.3" fill="#8e8a90" stroke="#3fd42a" stroke-width="1.6"/></svg><div class="a" style="left:916px;top:458px;width:20px;height:14px;border:1px solid #d0d0d0;background:rgba(40,40,40,.6)"></div><div class="t" style="left:919px;top:460px;font-size:10px;color:#d0d0d0;transform:scaleX(.9);transform-origin:0 0">0.0</div><svg style="left:940px;top:450px" width="10" height="10" viewBox="0 0 10 10"><path d="M1.5 1.5l6 3.5l-6 3.5" stroke="#c8c8c8" stroke-width="2.2" fill="none"/></svg><svg style="left:980px;top:449px" width="12" height="12" viewBox="0 0 12 12"><circle cx="6" cy="6" r="4.3" fill="#8e8a90" stroke="#b81414" stroke-width="1.8"/></svg><div class="a var" style="left:1069px;top:450px;width:111px;height:25px"></div><div class="t nl" style="left:1082px;top:458.0px;font-size:10px;color:#f0f0f0;transform:scaleX(0.9);transform-origin:0 0;">Footstep Timeline</div><svg style="left:1157px;top:457px" width="13" height="10" viewBox="0 0 13 10"><circle cx="5" cy="5" r="4.6" fill="#1ea6e8"/><path d="M9.6 2.8l2.4 2.2l-2.4 2.2z" fill="#1ea6e8"/></svg><div class="a node" style="left:1310px;top:401px;width:180px;height:76px"><div class="a" style="left:0;top:0;right:0;height:32px;background:linear-gradient(90deg,rgba(0,0,0,0) 30%,rgba(0,0,0,0.3) 70%,rgba(0,0,0,0.6) 100%),linear-gradient(180deg,#5e8db0 0%,#3f6580 50%,#4d7898 100%);border-radius:5px 5px 0 0"></div></div><svg style="left:1318px;top:405px" width="10" height="13" viewBox="0 0 10 13"><path d="M9 1.5Q7.5 0.5 6.3 1.6Q5.6 2.3 5.2 4.5L3.8 10.5Q3.3 12.3 1 11.8M3 5h4.5" stroke="#a8d4f4" stroke-width="1.2" fill="none" stroke-linecap="round"/></svg><div class="t nl" style="left:1331px;top:406.45px;font-size:11px;color:#f2f2f2;transform:scaleX(0.9);transform-origin:0 0;">Stop</div><div class="t nl" style="left:1331px;top:421.0px;font-size:10px;color:#9ab5c8;transform:scaleX(0.9);transform-origin:0 0;font-style:italic">Target is Timeline Component</div><svg style="left:1317px;top:439px" width="11" height="12" viewBox="0 0 11 12"><path d="M1 1h4.5l4.5 5l-4.5 5h-4.5z" fill="#f2f2f2" stroke="#f2f2f2" stroke-width="1" stroke-linejoin="round"/></svg><svg style="left:1459px;top:439px" width="11" height="12" viewBox="0 0 11 12"><path d="M1 1h4.5l4.5 5l-4.5 5h-4.5z" fill="none" stroke="#e8e8e8" stroke-width="1.2" stroke-linejoin="round"/></svg><svg style="left:1317px;top:460.8px" width="13" height="10" viewBox="0 0 13 10"><circle cx="5" cy="5" r="4.6" fill="#1ea6e8"/><path d="M9.6 2.8l2.4 2.2l-2.4 2.2z" fill="#1ea6e8"/></svg><div class="t nl" style="left:1333px;top:461.8px;font-size:10px;color:#f0f0f0;transform:scaleX(0.88);transform-origin:0 0;">Target</div><div class="a node" style="left:230px;top:534px;width:142px;height:62px"><div class="a" style="left:0;top:0;right:0;height:17px;background:linear-gradient(90deg,rgba(0,0,0,0) 30%,rgba(0,0,0,0.275) 70%,rgba(0,0,0,0.55) 100%),linear-gradient(180deg,#b41a1a 0%,#8a1212 50%,#a01616 100%);border-radius:5px 5px 0 0"></div></div><svg style="left:236px;top:537px" width="13" height="13" viewBox="0 0 13 13"><path d="M6.5 0.5l6 6l-6 6l-6 -6z" fill="#f0f0f0"/><path d="M4.2 6.5l2.8 -2.8v5.6z" fill="#7a1010"/><path d="M7 4.5l2 2l-2 2z" fill="#7a1010"/></svg><div class="t nl" style="left:251px;top:537.45px;font-size:11px;color:#f2f2f2;transform:scaleX(0.86);transform-origin:0 0;font-weight:bold">InputAxis MoveRight</div><div class="a" style="left:358px;top:538px;width:9px;height:9px;border:1.5px solid #e04040;background:#300;border-radius:2px"></div><svg style="left:353px;top:558.5px" width="11" height="12" viewBox="0 0 11 12"><path d="M1 1h4.5l4.5 5l-4.5 5h-4.5z" fill="#f2f2f2" stroke="#f2f2f2" stroke-width="1" stroke-linejoin="round"/></svg><div class="t nl" style="right:1572px;top:581.0px;font-size:10px;color:#f0f0f0;transform:scaleX(0.88);transform-origin:100% 0;">Axis Value</div><svg style="left:351px;top:580px" width="13" height="10" viewBox="0 0 13 10"><circle cx="5" cy="5" r="4.6" fill="#3fd42a"/><path d="M9.6 2.8l2.4 2.2l-2.4 2.2z" fill="#3fd42a"/></svg><div class="a node" style="left:494px;top:522px;width:142px;height:141px"><div class="a" style="left:0;top:0;right:0;height:31px;background:linear-gradient(90deg,rgba(0,0,0,0) 30%,rgba(0,0,0,0.3) 70%,rgba(0,0,0,0.6) 100%),linear-gradient(180deg,#5e8db0 0%,#3f6580 50%,#4d7898 100%);border-radius:5px 5px 0 0"></div></div><svg style="left:502px;top:526px" width="10" height="13" viewBox="0 0 10 13"><path d="M9 1.5Q7.5 0.5 6.3 1.6Q5.6 2.3 5.2 4.5L3.8 10.5Q3.3 12.3 1 11.8M3 5h4.5" stroke="#a8d4f4" stroke-width="1.2" fill="none" stroke-linecap="round"/></svg><div class="t nl" style="left:515px;top:526.725px;font-size:10.5px;color:#f2f2f2;transform:scaleX(0.9);transform-origin:0 0;font-weight:bold">Add Movement Input</div><div class="t nl" style="left:515px;top:541.0px;font-size:10px;color:#9ab5c8;transform:scaleX(0.92);transform-origin:0 0;font-style:italic">Target is Pawn</div><svg style="left:501px;top:559px" width="11" height="12" viewBox="0 0 11 12"><path d="M1 1h4.5l4.5 5l-4.5 5h-4.5z" fill="#f2f2f2" stroke="#f2f2f2" stroke-width="1" stroke-linejoin="round"/></svg><svg style="left:617.5px;top:559px" width="11" height="12" viewBox="0 0 11 12"><path d="M1 1h4.5l4.5 5l-4.5 5h-4.5z" fill="#f2f2f2" stroke="#f2f2f2" stroke-width="1" stroke-linejoin="round"/></svg><svg style="left:500px;top:582.5px" width="13" height="10" viewBox="0 0 13 10"><circle cx="5" cy="5" r="3.9" fill="#111" stroke="#1ea0e0" stroke-width="1.5"/><path d="M9.6 2.8l2.4 2.2l-2.4 2.2z" fill="#1ea0e0"/></svg><div class="t nl" style="left:517px;top:583.5px;font-size:10px;color:#f0f0f0;transform:scaleX(0.88);transform-origin:0 0;">Target</div><div class="a" style="left:547px;top:581px;width:22px;height:14px;border:1px solid #bdbdbd;background:#131313"></div><div class="t nl" style="left:550px;top:583.0px;font-size:10px;color:#c8c8c8;transform:scaleX(.95);transform-origin:0 0">self</div><svg style="left:500px;top:603.7px" width="13" height="10" viewBox="0 0 13 10"><circle cx="5" cy="5" r="4.6" fill="#f0c020"/><path d="M9.6 2.8l2.4 2.2l-2.4 2.2z" fill="#f0c020"/></svg><div class="t nl" style="left:517px;top:604.7px;font-size:10px;color:#f0f0f0;transform:scaleX(0.88);transform-origin:0 0;">World Direction</div><svg style="left:500px;top:623.7px" width="13" height="10" viewBox="0 0 13 10"><circle cx="5" cy="5" r="4.6" fill="#3fd42a"/><path d="M9.6 2.8l2.4 2.2l-2.4 2.2z" fill="#3fd42a"/></svg><div class="t nl" style="left:517px;top:624.7px;font-size:10px;color:#f0f0f0;transform:scaleX(0.88);transform-origin:0 0;">Scale Value</div><svg style="left:500px;top:645px" width="13" height="10" viewBox="0 0 13 10"><circle cx="5" cy="5" r="3.9" fill="#111" stroke="#7a1010" stroke-width="1.5"/><path d="M9.6 2.8l2.4 2.2l-2.4 2.2z" fill="#7a1010"/></svg><div class="t nl" style="left:517px;top:646.0px;font-size:10px;color:#f0f0f0;transform:scaleX(0.88);transform-origin:0 0;">Force</div><div class="a" style="left:544px;top:643px;width:12px;height:13px;background:#121212;border:1px solid #2a2a2a;border-radius:1px"></div><div class="a node" style="left:218px;top:690px;width:169px;height:57px"><div class="a" style="left:0;top:0;right:0;height:31px;background:linear-gradient(90deg,rgba(0,0,0,0) 30%,rgba(0,0,0,0.3) 70%,rgba(0,0,0,0.6) 100%),linear-gradient(180deg,#6b985f 0%,#4a6c42 50%,#5a8150 100%);border-radius:5px 5px 0 0"></div></div><svg style="left:226px;top:694px" width="10" height="13" viewBox="0 0 10 13"><path d="M9 1.5Q7.5 0.5 6.3 1.6Q5.6 2.3 5.2 4.5L3.8 10.5Q3.3 12.3 1 11.8M3 5h4.5" stroke="#d0e8c8" stroke-width="1.2" fill="none" stroke-linecap="round"/></svg><div class="t nl" style="left:239px;top:694.725px;font-size:10.5px;color:#f2f2f2;transform:scaleX(0.88);transform-origin:0 0;font-weight:bold">Get Actor Right Vector</div><div class="t nl" style="left:239px;top:709.0px;font-size:10px;color:#a8c0a0;transform:scaleX(0.92);transform-origin:0 0;font-style:italic">Target is Actor</div><svg style="left:225.5px;top:729px" width="13" height="10" viewBox="0 0 13 10"><circle cx="5" cy="5" r="3.9" fill="#111" stroke="#1ea0e0" stroke-width="1.5"/><path d="M9.6 2.8l2.4 2.2l-2.4 2.2z" fill="#1ea0e0"/></svg><div class="t nl" style="left:241px;top:730.0px;font-size:10px;color:#f0f0f0;transform:scaleX(0.88);transform-origin:0 0;">Target</div><div class="a" style="left:271px;top:727px;width:22px;height:14px;border:1px solid #bdbdbd;background:#131313"></div><div class="t nl" style="left:274px;top:729.0px;font-size:10px;color:#c8c8c8;transform:scaleX(.95);transform-origin:0 0">self</div><div class="t nl" style="right:1556px;top:729.0px;font-size:10px;color:#f0f0f0;transform:scaleX(0.88);transform-origin:100% 0;">Return Value</div><svg style="left:367px;top:728px" width="13" height="10" viewBox="0 0 13 10"><circle cx="5" cy="5" r="4.6" fill="#f0c020"/><path d="M9.6 2.8l2.4 2.2l-2.4 2.2z" fill="#f0c020"/></svg><div class="a node" style="left:854px;top:557px;width:173px;height:169px"><div class="a" style="left:0;top:0;right:0;height:17px;background:linear-gradient(90deg,rgba(0,0,0,0) 30%,rgba(0,0,0,0.3) 70%,rgba(0,0,0,0.6) 100%),linear-gradient(180deg,#c29c2a 0%,#8e7016 50%,#a88620 100%);border-radius:5px 5px 0 0"></div></div><svg style="left:860px;top:560px" width="12" height="12" viewBox="0 0 12 12"><circle cx="6" cy="6" r="5" fill="none" stroke="#f0e6c0" stroke-width="1.3"/><path d="M6 3v3.3l2.2 1.3" stroke="#f0e6c0" fill="none" stroke-width="1.2"/></svg><div class="t nl" style="left:875px;top:561.45px;font-size:11px;color:#f2f2f2;transform:scaleX(0.9);transform-origin:0 0;font-weight:bold">Footstep_Timeline</div><svg style="left:1011px;top:559px" width="14" height="13" viewBox="0 0 14 13"><path d="M2 6q0 -4 5 -4h4M12 7q0 4 -5 4h-4" stroke="#eee" fill="none" stroke-width="1.6"/><path d="M10 0l3 2l-3 2.5zM4 8.5l-3 2.5l3 2z" fill="#eee"/></svg><svg style="left:861px;top:581px" width="11" height="12" viewBox="0 0 11 12"><path d="M1 1h4.5l4.5 5l-4.5 5h-4.5z" fill="none" stroke="#e8e8e8" stroke-width="1.2" stroke-linejoin="round"/></svg><div class="t nl" style="left:875px;top:583.0px;font-size:10px;color:#f0f0f0;transform:scaleX(0.88);transform-origin:0 0;">Play</div><svg style="left:861px;top:602px" width="11" height="12" viewBox="0 0 11 12"><path d="M1 1h4.5l4.5 5l-4.5 5h-4.5z" fill="none" stroke="#e8e8e8" stroke-width="1.2" stroke-linejoin="round"/></svg><div class="t nl" style="left:875px;top:604.0px;font-size:10px;color:#f0f0f0;transform:scaleX(0.88);transform-origin:0 0;">Play from Start</div><svg style="left:861px;top:623px" width="11" height="12" viewBox="0 0 11 12"><path d="M1 1h4.5l4.5 5l-4.5 5h-4.5z" fill="none" stroke="#e8e8e8" stroke-width="1.2" stroke-linejoin="round"/></svg><div class="t nl" style="left:875px;top:625.0px;font-size:10px;color:#f0f0f0;transform:scaleX(0.88);transform-origin:0 0;">Stop</div><svg style="left:861px;top:644px" width="11" height="12" viewBox="0 0 11 12"><path d="M1 1h4.5l4.5 5l-4.5 5h-4.5z" fill="none" stroke="#e8e8e8" stroke-width="1.2" stroke-linejoin="round"/></svg><div class="t nl" style="left:875px;top:646.0px;font-size:10px;color:#f0f0f0;transform:scaleX(0.88);transform-origin:0 0;">Reverse</div><svg style="left:861px;top:665px" width="11" height="12" viewBox="0 0 11 12"><path d="M1 1h4.5l4.5 5l-4.5 5h-4.5z" fill="none" stroke="#e8e8e8" stroke-width="1.2" stroke-linejoin="round"/></svg><div class="t nl" style="left:875px;top:667.0px;font-size:10px;color:#f0f0f0;transform:scaleX(0.88);transform-origin:0 0;">Reverse from End</div><svg style="left:861px;top:686px" width="11" height="12" viewBox="0 0 11 12"><path d="M1 1h4.5l4.5 5l-4.5 5h-4.5z" fill="none" stroke="#e8e8e8" stroke-width="1.2" stroke-linejoin="round"/></svg><div class="t nl" style="left:875px;top:688.0px;font-size:10px;color:#f0f0f0;transform:scaleX(0.88);transform-origin:0 0;">Set New Time</div><svg style="left:861px;top:709px" width="13" height="10" viewBox="0 0 13 10"><circle cx="5" cy="5" r="3.9" fill="#111" stroke="#3fd42a" stroke-width="1.5"/><path d="M9.6 2.8l2.4 2.2l-2.4 2.2z" fill="#3fd42a"/></svg><div class="t nl" style="left:877px;top:710.0px;font-size:10px;color:#f0f0f0;transform:scaleX(0.88);transform-origin:0 0;">New Time</div><div class="a" style="left:920px;top:707px;width:19px;height:13px;border:1px solid #bdbdbd;background:#131313"></div><div class="t nl" style="left:923px;top:708.5px;font-size:10px;color:#c8c8c8;transform:scaleX(.95);transform-origin:0 0">0.0</div><div class="t nl" style="right:914px;top:583.0px;font-size:10px;color:#f0f0f0;transform:scaleX(0.88);transform-origin:100% 0;">Update</div><svg style="left:1009.5px;top:581px" width="11" height="12" viewBox="0 0 11 12"><path d="M1 1h4.5l4.5 5l-4.5 5h-4.5z" fill="none" stroke="#e8e8e8" stroke-width="1.2" stroke-linejoin="round"/></svg><div class="t nl" style="right:914px;top:604.0px;font-size:10px;color:#f0f0f0;transform:scaleX(0.88);transform-origin:100% 0;">Finished</div><svg style="left:1009.5px;top:602px" width="11" height="12" viewBox="0 0 11 12"><path d="M1 1h4.5l4.5 5l-4.5 5h-4.5z" fill="none" stroke="#e8e8e8" stroke-width="1.2" stroke-linejoin="round"/></svg><div class="t nl" style="right:916px;top:625.0px;font-size:10px;color:#f0f0f0;transform:scaleX(0.88);transform-origin:100% 0;">Direction</div><svg style="left:1008px;top:624px" width="13" height="10" viewBox="0 0 13 10"><circle cx="5" cy="5" r="3.9" fill="#111" stroke="#0e8a78" stroke-width="1.5"/><path d="M9.6 2.8l2.4 2.2l-2.4 2.2z" fill="#0e8a78"/></svg><div class="t nl" style="right:914px;top:645.8px;font-size:10px;color:#f0f0f0;transform:scaleX(0.88);transform-origin:100% 0;">Footstep</div><svg style="left:1009.5px;top:643.8px" width="11" height="12" viewBox="0 0 11 12"><path d="M1 1h4.5l4.5 5l-4.5 5h-4.5z" fill="#f2f2f2" stroke="#f2f2f2" stroke-width="1" stroke-linejoin="round"/></svg><div class="a node" style="left:1142px;top:605px;width:216px;height:122px"><div class="a" style="left:0;top:0;right:0;height:32px;background:linear-gradient(90deg,rgba(0,0,0,0) 30%,rgba(0,0,0,0.3) 70%,rgba(0,0,0,0.6) 100%),linear-gradient(180deg,#5e8db0 0%,#3f6580 50%,#4d7898 100%);border-radius:5px 5px 0 0"></div></div><svg style="left:1148px;top:609px" width="11" height="11" viewBox="0 0 11 11"><path d="M5.5 0.5l5 5l-5 5l-5 -5z" fill="#f0f0f0"/><path d="M5.5 3.2l2.3 2.3l-2.3 2.3z" fill="#3a607c"/><path d="M3.2 5.5l2.3 -2.3v4.6z" fill="#3a607c"/></svg><div class="t nl" style="left:1163px;top:610.45px;font-size:11px;color:#f2f2f2;transform:scaleX(0.9);transform-origin:0 0;">Footstep</div><div class="t nl" style="left:1163px;top:625.0px;font-size:10px;color:#9ab5c8;transform:scaleX(0.9);transform-origin:0 0;font-style:italic">Target is Physmat Interaction Component</div><svg style="left:1149px;top:643.3px" width="11" height="12" viewBox="0 0 11 12"><path d="M1 1h4.5l4.5 5l-4.5 5h-4.5z" fill="#f2f2f2" stroke="#f2f2f2" stroke-width="1" stroke-linejoin="round"/></svg><svg style="left:1340px;top:643.3px" width="11" height="12" viewBox="0 0 11 12"><path d="M1 1h4.5l4.5 5l-4.5 5h-4.5z" fill="none" stroke="#e8e8e8" stroke-width="1.2" stroke-linejoin="round"/></svg><svg style="left:1149px;top:665px" width="13" height="10" viewBox="0 0 13 10"><circle cx="5" cy="5" r="4.6" fill="#1ea6e8"/><path d="M9.6 2.8l2.4 2.2l-2.4 2.2z" fill="#1ea6e8"/></svg><div class="t nl" style="left:1165px;top:666.0px;font-size:10px;color:#f0f0f0;transform:scaleX(0.88);transform-origin:0 0;">Target</div><svg style="left:1149px;top:686px" width="13" height="10" viewBox="0 0 13 10"><circle cx="5" cy="5" r="3.9" fill="#111" stroke="#7a1010" stroke-width="1.5"/><path d="M9.6 2.8l2.4 2.2l-2.4 2.2z" fill="#7a1010"/></svg><div class="t nl" style="left:1165px;top:687.0px;font-size:10px;color:#f0f0f0;transform:scaleX(0.88);transform-origin:0 0;">Walking</div><div class="a" style="left:1201px;top:684px;width:13px;height:14px;background:#121212;border:1px solid #2a2a2a;border-radius:1px"></div><svg style="left:1149px;top:709px" width="13" height="10" viewBox="0 0 13 10"><circle cx="5" cy="5" r="3.9" fill="#111" stroke="#b070e0" stroke-width="1.5"/><path d="M9.6 2.8l2.4 2.2l-2.4 2.2z" fill="#b070e0"/></svg><div class="t nl" style="left:1165px;top:709.7px;font-size:10px;color:#f0f0f0;transform:scaleX(0.88);transform-origin:0 0;">Bone</div><div class="a" style="left:1190px;top:707px;width:28px;height:14px;border:1px solid #bdbdbd;background:#131313"></div><div class="t nl" style="left:1193px;top:709.0px;font-size:10px;color:#c8c8c8;transform:scaleX(.95);transform-origin:0 0">None</div><div class="a var" style="left:889px;top:786px;width:124px;height:25px"></div><div class="t nl" style="left:902px;top:794.0px;font-size:10px;color:#f0f0f0;transform:scaleX(0.9);transform-origin:0 0;">Footstep Component</div><svg style="left:990px;top:793px" width="13" height="10" viewBox="0 0 13 10"><circle cx="5" cy="5" r="4.6" fill="#1ea6e8"/><path d="M9.6 2.8l2.4 2.2l-2.4 2.2z" fill="#1ea6e8"/></svg></div>
<div class="a" style="left:204px;top:127px;width:1273px;height:38px;background:rgba(26,26,26,.72);border-top:1px solid #3a3a3a"></div>
<svg style="left:213px;top:137px" width="14" height="17" viewBox="0 0 14 17"><path d="M1 1h8v2h-6v11l-2 2z" fill="#8a8a8a"/><path d="M4 4h8v12l-4 -3.5l-4 3.5z" fill="#d6d6d6" stroke="#222" stroke-width=".6"/></svg>
<svg style="left:231px;top:143px" width="10" height="6" viewBox="0 0 10 6"><path d="M1 1l4 4l4 -4" stroke="#ccc" fill="none" stroke-width="1.4"/></svg>
<div class="a" style="left:251px;top:130px;width:2px;height:32px;background:#111"></div>
<svg style="left:260px;top:137px" width="20" height="16" viewBox="0 0 20 16"><path d="M1 8l7 -7v4h11v6h-11v4z" fill="#f0f0f0"/></svg>
<svg style="left:299px;top:137px" width="20" height="16" viewBox="0 0 20 16"><path d="M19 8l-7 -7v4h-11v6h11v4z" fill="#9a9a9a"/></svg>
<div class="a" style="left:329px;top:130px;width:2px;height:32px;background:#111"></div>
<svg style="left:343px;top:135px" width="22" height="20" viewBox="0 0 22 20"><rect x="1" y="1" width="7" height="6" rx="1" fill="#c8c8c8"/><rect x="15" y="3" width="6" height="4" rx="1" fill="#c8c8c8"/><rect x="2" y="15" width="4" height="4" rx="1" fill="#c8c8c8"/><rect x="15" y="13" width="6" height="5" rx="1" fill="#c8c8c8"/><path d="M8 5h7M4 7v8M7 7l8 8" stroke="#c8c8c8" stroke-width="1.4"/></svg>
<div class="t" style="left:380px;top:136px;font-size:18.5px;color:#a8a8a8">Example_FPSPlayer</div>
<svg style="left:558px;top:138px" width="9" height="15" viewBox="0 0 9 15"><path d="M1.5 1.5l6 6l-6 6" stroke="#d0d0d0" fill="none" stroke-width="1.6"/></svg>
<div class="t" style="left:576px;top:136px;font-size:18.5px;color:#a8a8a8">Event Graph</div>
<div class="t" style="left:1402px;top:136px;font-size:19.5px;font-weight:bold;color:#4e4e4e;transform:scaleX(.92);transform-origin:0 0">Zoom -2</div>

<div class="a" style="left:1482px;top:102px;width:160px;height:26px;background:#242424;border-radius:5px 5px 0 0"></div>
<svg style="left:1488px;top:105px" width="16" height="16" viewBox="0 0 16 16"><path d="M2 14l1.5 -4.5l8 -8l3 3l-8 8z" fill="#cfcfcf"/><path d="M1 15l2.5 -1" stroke="#cfcfcf"/><path d="M1 2h6M1 5h4M8 15h8M11 12h5" stroke="#8a8a8a" stroke-width="1"/></svg>
<div class="t ptab" style="left:1509px;top:107px;color:#d8d8d8">Details</div>
<div class="t" style="left:1619px;top:107px;font-size:12px;color:#cfcfcf">✕</div>
<div class="a" style="left:1482px;top:127px;width:434px;height:917px;background:#242424"></div>
<div class="a" style="left:1491px;top:134px;width:368px;height:23px;background:#0f0f0f;border:1px solid #2e2e2e;border-radius:12px"></div>
<svg style="left:1495px;top:137px" width="17" height="17" viewBox="0 0 17 17"><circle cx="7" cy="7" r="5.5" fill="none" stroke="#d8d8d8" stroke-width="1.6"/><path d="M11 11l4.5 4.5" stroke="#d8d8d8" stroke-width="1.7"/></svg>
<div class="t" style="left:1518px;top:138px;font-size:13px;color:#5e5e5e">Search</div>
<svg style="left:1872px;top:138px" width="15" height="14" viewBox="0 0 15 14"><rect x="0.8" y="0.8" width="13.4" height="12.4" fill="none" stroke="#d8d8d8" stroke-width="1.6"/><path d="M1 4.5h13M1 8h13M1 11h13M7.5 4.5v8" stroke="#d8d8d8" stroke-width="1.3"/></svg>
<svg style="left:1896px;top:137px" width="16" height="16" viewBox="0 0 16 16"><circle cx="8" cy="8" r="5.5" fill="none" stroke="#d8d8d8" stroke-width="2.6" stroke-dasharray="2.2 2.1"/><circle cx="8" cy="8" r="4.3" fill="none" stroke="#d8d8d8" stroke-width="1.6"/><circle cx="8" cy="8" r="1.5" fill="#d8d8d8"/></svg>
<div class="a" style="left:1482px;top:165px;width:434px;height:26px;background:#2f2f2f"></div>
<div class="a" style="left:1482px;top:191px;width:434px;height:1px;background:#1a1a1a"></div>
<svg style="left:1487px;top:175px" width="11" height="7" viewBox="0 0 11 7"><path d="M0 0h11l-5.5 7z" fill="#8a8a8a"/></svg>
<div class="t" style="left:1504px;top:174px;font-size:11px;font-weight:bold;color:#d8d8d8">Variable</div>
<div class="a" style="left:1482px;top:191px;width:434px;height:26px;background:#242424"></div>
<div class="a" style="left:1482px;top:217px;width:434px;height:1px;background:#1a1a1a"></div>
<div class="a" style="left:1640px;top:191px;width:1px;height:27px;background:#1a1a1a"></div>
<div class="a" style="left:1877px;top:191px;width:1px;height:27px;background:#1a1a1a"></div>
<div class="t" style="left:1504px;top:199px;font-size:11px;color:#c0c0c0;width:136px;overflow:hidden">Editable when Inherited</div>
<div class="a" style="left:1652px;top:196px;width:17px;height:17px;background:#121212;border:1px solid #262626;border-radius:3px"></div>
<svg style="left:1655px;top:200px" width="11" height="9" viewBox="0 0 11 9"><path d="M1.5 4.5l3 3l5 -6" stroke="#1f86ff" stroke-width="2" fill="none"/></svg>
<div class="a" style="left:1482px;top:218px;width:434px;height:26px;background:#242424"></div>
<div class="a" style="left:1482px;top:244px;width:434px;height:1px;background:#1a1a1a"></div>
<div class="a" style="left:1640px;top:218px;width:1px;height:27px;background:#1a1a1a"></div>
<div class="a" style="left:1877px;top:218px;width:1px;height:27px;background:#1a1a1a"></div>
<div class="t" style="left:1504px;top:226px;font-size:11px;color:#c0c0c0;width:136px;overflow:hidden">Variable Name</div>
<div class="a" style="left:1652px;top:223px;width:124px;height:18px;background:#0f0f0f;border:1px solid #262626;border-radius:4px"></div>
<div class="t" style="left:1661px;top:226.0px;font-size:11px;color:#e0e0e0">Footstep_Component</div>
<div class="a" style="left:1482px;top:245px;width:434px;height:26px;background:#242424"></div>
<div class="a" style="left:1482px;top:271px;width:434px;height:1px;background:#1a1a1a"></div>
<div class="a" style="left:1640px;top:245px;width:1px;height:27px;background:#1a1a1a"></div>
<div class="a" style="left:1877px;top:245px;width:1px;height:27px;background:#1a1a1a"></div>
<div class="t" style="left:1504px;top:253px;font-size:11px;color:#c0c0c0;width:136px;overflow:hidden">Tooltip</div>
<div class="a" style="left:1652px;top:250px;width:124px;height:18px;background:#0f0f0f;border:1px solid #262626;border-radius:4px"></div>
<div class="a" style="left:1482px;top:272px;width:434px;height:26px;background:#242424"></div>
<div class="a" style="left:1482px;top:298px;width:434px;height:1px;background:#1a1a1a"></div>
<div class="a" style="left:1640px;top:272px;width:1px;height:27px;background:#1a1a1a"></div>
<div class="a" style="left:1877px;top:272px;width:1px;height:27px;background:#1a1a1a"></div>
<div class="t" style="left:1504px;top:280px;font-size:11px;color:#c0c0c0;width:136px;overflow:hidden">Category</div>
<div class="a" style="left:1652px;top:276px;width:124px;height:20px;background:#0f0f0f;border:1px solid #262626;border-radius:4px"></div>
<div class="a" style="left:1659px;top:277px;width:79px;height:18px;background:#121212;border:1px solid #2a2a2a;border-radius:4px"></div>
<div class="t" style="left:1668px;top:280px;font-size:11px;color:#e0e0e0">Default</div>
<svg style="left:1749px;top:282px" width="10" height="7" viewBox="0 0 10 7"><path d="M1 1l4 4l4 -4" stroke="#e0e0e0" fill="none" stroke-width="1.6"/></svg>
<div class="a" style="left:1482px;top:299px;width:434px;height:26px;background:#2f2f2f"></div>
<div class="a" style="left:1482px;top:325px;width:434px;height:1px;background:#1a1a1a"></div>
<svg style="left:1487px;top:309px" width="11" height="7" viewBox="0 0 11 7"><path d="M0 0h11l-5.5 7z" fill="#8a8a8a"/></svg>
<div class="t" style="left:1504px;top:308px;font-size:11px;font-weight:bold;color:#d8d8d8">Sockets</div>
<div class="a" style="left:1482px;top:326px;width:434px;height:26px;background:#242424"></div>
<div class="a" style="left:1482px;top:352px;width:434px;height:1px;background:#1a1a1a"></div>
<div class="a" style="left:1640px;top:326px;width:1px;height:27px;background:#1a1a1a"></div>
<div class="a" style="left:1877px;top:326px;width:1px;height:27px;background:#1a1a1a"></div>
<div class="t" style="left:1504px;top:334px;font-size:11px;color:#c0c0c0;width:136px;overflow:hidden">Parent Socket</div>
<div class="a" style="left:1652px;top:328px;width:72px;height:23px;background:#2a2a2a;border:1px solid #262626;border-radius:4px"></div>
<div class="t" style="left:1661px;top:333.5px;font-size:11px;color:#c8c8c8">None</div>
<svg style="left:1730px;top:332px" width="17" height="16" viewBox="0 0 17 16"><path d="M1 1h6l2 2v9h-8z" fill="#bdbdbd"/><circle cx="11.5" cy="10" r="3.8" fill="#242424" stroke="#d0d0d0" stroke-width="1.4"/><path d="M9 13l-2.5 2.5" stroke="#d0d0d0" stroke-width="1.6"/></svg>
<svg style="left:1758px;top:334px" width="12" height="12" viewBox="0 0 12 12"><path d="M1 1l10 10M11 1l-10 10" stroke="#e0e0e0" stroke-width="1.8"/></svg>
<div class="a" style="left:1482px;top:353px;width:434px;height:26px;background:#2f2f2f"></div>
<div class="a" style="left:1482px;top:379px;width:434px;height:1px;background:#1a1a1a"></div>
<svg style="left:1487px;top:363px" width="11" height="7" viewBox="0 0 11 7"><path d="M0 0h11l-5.5 7z" fill="#8a8a8a"/></svg>
<div class="t" style="left:1504px;top:362px;font-size:11px;font-weight:bold;color:#d8d8d8">Default</div>
<div class="a" style="left:1482px;top:380px;width:434px;height:57px;background:#242424"></div>
<div class="a" style="left:1482px;top:437px;width:434px;height:1px;background:#1a1a1a"></div>
<div class="a" style="left:1640px;top:380px;width:1px;height:58px;background:#1a1a1a"></div>
<div class="a" style="left:1877px;top:380px;width:1px;height:58px;background:#1a1a1a"></div>
<div class="t" style="left:1504px;top:404px;font-size:11px;color:#c0c0c0;width:136px;overflow:hidden">Physmat Data</div>
<div class="a" style="left:1653px;top:386px;width:48px;height:50px;background:#151515;border-radius:3px"></div>
<div class="a" style="left:1659px;top:391px;width:37px;height:40px;background:linear-gradient(180deg,#5a5a5a,#2a2a2a);"></div>
<div class="a" style="left:1674px;top:394px;width:6px;height:30px;background:#f0f0f0"></div>
<div class="a" style="left:1664px;top:414px;width:5px;height:10px;background:#a0a0a0"></div>
<div class="a" style="left:1685px;top:403px;width:5px;height:21px;background:#a0a0a0"></div>
<div class="a" style="left:1712px;top:386px;width:162px;height:20px;background:#0f0f0f;border-radius:4px"></div>
<div class="t" style="left:1719px;top:391px;font-size:11px;color:#e0e0e0">Physmat_Data_Human</div>
<svg style="left:1852px;top:393px" width="10" height="7" viewBox="0 0 10 7"><path d="M1 1l4 4l4 -4" stroke="#e0e0e0" fill="none" stroke-width="1.6"/></svg>
<svg style="left:1716px;top:412px" width="40" height="10" viewBox="0 0 40 10"><path d="M2 9a5 5 0 0 1 10 0" stroke="#bbb" fill="none" stroke-width="1.6"/><path d="M28 2h4l2 2h4v6h-10z" fill="#bbb"/></svg>
<div class="a" style="left:1482px;top:438px;width:434px;height:26px;background:#2f2f2f"></div>
<div class="a" style="left:1482px;top:464px;width:434px;height:1px;background:#1a1a1a"></div>
<svg style="left:1487px;top:448px" width="11" height="7" viewBox="0 0 11 7"><path d="M0 0h11l-5.5 7z" fill="#8a8a8a"/></svg>
<div class="t" style="left:1504px;top:447px;font-size:11px;font-weight:bold;color:#d8d8d8">Tags</div>
<div class="a" style="left:1482px;top:465px;width:434px;height:26px;background:#242424"></div>
<div class="a" style="left:1482px;top:491px;width:434px;height:1px;background:#1a1a1a"></div>
<div class="a" style="left:1640px;top:465px;width:1px;height:27px;background:#1a1a1a"></div>
<div class="a" style="left:1877px;top:465px;width:1px;height:27px;background:#1a1a1a"></div>
<div class="t" style="left:1504px;top:473px;font-size:11px;color:#c0c0c0;width:136px;overflow:hidden">Component Tags</div>
<div class="t" style="left:1652px;top:473px;font-size:11px;color:#c8c8c8">0 Array elements</div>
<svg style="left:1777px;top:471px" width="16" height="16" viewBox="0 0 16 16"><circle cx="8" cy="8" r="6.8" fill="none" stroke="#d0d0d0" stroke-width="1.3"/><path d="M8 4.5v7M4.5 8h7" stroke="#d0d0d0" stroke-width="1.6"/></svg>
<svg style="left:1803px;top:470px" width="15" height="17" viewBox="0 0 15 17"><path d="M1 4h13M5 4v-2.5h5v2.5M3 4l1 12h7l1 -12" stroke="#d0d0d0" fill="none" stroke-width="1.6"/></svg>
<div class="a" style="left:1482px;top:492px;width:434px;height:26px;background:#2f2f2f"></div>
<div class="a" style="left:1482px;top:518px;width:434px;height:1px;background:#1a1a1a"></div>
<svg style="left:1487px;top:502px" width="11" height="7" viewBox="0 0 11 7"><path d="M0 0h11l-5.5 7z" fill="#8a8a8a"/></svg>
<div class="t" style="left:1504px;top:501px;font-size:11px;font-weight:bold;color:#d8d8d8">Component Tick</div>
<div class="a" style="left:1482px;top:519px;width:434px;height:26px;background:#242424"></div>
<div class="a" style="left:1482px;top:545px;width:434px;height:1px;background:#1a1a1a"></div>
<div class="a" style="left:1640px;top:519px;width:1px;height:27px;background:#1a1a1a"></div>
<div class="a" style="left:1877px;top:519px;width:1px;height:27px;background:#1a1a1a"></div>
<div class="t" style="left:1504px;top:527px;font-size:11px;color:#c0c0c0;width:136px;overflow:hidden">Start with Tick Enabled</div>
<div class="a" style="left:1652px;top:524px;width:17px;height:17px;background:#121212;border:1px solid #262626;border-radius:3px"></div>
<svg style="left:1655px;top:528px" width="11" height="9" viewBox="0 0 11 9"><path d="M1.5 4.5l3 3l5 -6" stroke="#1f86ff" stroke-width="2" fill="none"/></svg>
<div class="a" style="left:1482px;top:546px;width:434px;height:26px;background:#242424"></div>
<div class="a" style="left:1482px;top:572px;width:434px;height:1px;background:#1a1a1a"></div>
<div class="a" style="left:1640px;top:546px;width:1px;height:27px;background:#1a1a1a"></div>
<div class="a" style="left:1877px;top:546px;width:1px;height:27px;background:#1a1a1a"></div>
<div class="t" style="left:1504px;top:554px;font-size:11px;color:#c0c0c0;width:136px;overflow:hidden">Tick Interval (secs)</div>
<div class="a" style="left:1652px;top:550px;width:124px;height:19px;background:#0f0f0f;border:1px solid #262626;border-radius:4px"></div>
<div class="t" style="left:1661px;top:553.5px;font-size:11px;color:#e0e0e0">0.0</div>
<div class="a" style="left:1482px;top:573px;width:434px;height:26px;background:#2f2f2f"></div>
<div class="a" style="left:1482px;top:599px;width:434px;height:1px;background:#1a1a1a"></div>
<svg style="left:1489px;top:581px" width="7" height="11" viewBox="0 0 7 11"><path d="M0 0v11l7 -5.5z" fill="#8a8a8a"/></svg>
<div class="t" style="left:1504px;top:582px;font-size:11px;font-weight:bold;color:#d8d8d8">Advanced</div>
<div class="a" style="left:1482px;top:600px;width:434px;height:26px;background:#2f2f2f"></div>
<div class="a" style="left:1482px;top:626px;width:434px;height:1px;background:#1a1a1a"></div>
<svg style="left:1487px;top:610px" width="11" height="7" viewBox="0 0 11 7"><path d="M0 0h11l-5.5 7z" fill="#8a8a8a"/></svg>
<div class="t" style="left:1504px;top:609px;font-size:11px;font-weight:bold;color:#d8d8d8">Component Replication</div>
<div class="a" style="left:1482px;top:627px;width:434px;height:26px;background:#242424"></div>
<div class="a" style="left:1482px;top:653px;width:434px;height:1px;background:#1a1a1a"></div>
<div class="a" style="left:1640px;top:627px;width:1px;height:27px;background:#1a1a1a"></div>
<div class="a" style="left:1877px;top:627px;width:1px;height:27px;background:#1a1a1a"></div>
<div class="t" style="left:1504px;top:635px;font-size:11px;color:#c0c0c0;width:136px;overflow:hidden">Component Replicates</div>
<div class="a" style="left:1652px;top:632px;width:17px;height:17px;background:#121212;border:1px solid #262626;border-radius:3px"></div>
<div class="a" style="left:1482px;top:654px;width:434px;height:26px;background:#2f2f2f"></div>
<div class="a" style="left:1482px;top:680px;width:434px;height:1px;background:#1a1a1a"></div>
<svg style="left:1487px;top:664px" width="11" height="7" viewBox="0 0 11 7"><path d="M0 0h11l-5.5 7z" fill="#8a8a8a"/></svg>
<div class="t" style="left:1504px;top:663px;font-size:11px;font-weight:bold;color:#d8d8d8">Activation</div>
<div class="a" style="left:1482px;top:681px;width:434px;height:26px;background:#242424"></div>
<div class="a" style="left:1482px;top:707px;width:434px;height:1px;background:#1a1a1a"></div>
<div class="a" style="left:1640px;top:681px;width:1px;height:27px;background:#1a1a1a"></div>
<div class="a" style="left:1877px;top:681px;width:1px;height:27px;background:#1a1a1a"></div>
<div class="t" style="left:1504px;top:689px;font-size:11px;color:#c0c0c0;width:136px;overflow:hidden">Auto Activate</div>
<div class="a" style="left:1652px;top:686px;width:17px;height:17px;background:#121212;border:1px solid #262626;border-radius:3px"></div>
<div class="a" style="left:1482px;top:708px;width:434px;height:26px;background:#2f2f2f"></div>
<div class="a" style="left:1482px;top:734px;width:434px;height:1px;background:#1a1a1a"></div>
<svg style="left:1487px;top:718px" width="11" height="7" viewBox="0 0 11 7"><path d="M0 0h11l-5.5 7z" fill="#8a8a8a"/></svg>
<div class="t" style="left:1504px;top:717px;font-size:11px;font-weight:bold;color:#d8d8d8">Cooking</div>
<div class="a" style="left:1482px;top:735px;width:434px;height:26px;background:#242424"></div>
<div class="a" style="left:1482px;top:761px;width:434px;height:1px;background:#1a1a1a"></div>
<div class="a" style="left:1640px;top:735px;width:1px;height:27px;background:#1a1a1a"></div>
<div class="a" style="left:1877px;top:735px;width:1px;height:27px;background:#1a1a1a"></div>
<div class="t" style="left:1504px;top:743px;font-size:11px;color:#c0c0c0;width:136px;overflow:hidden">Is Editor Only</div>
<div class="a" style="left:1652px;top:740px;width:17px;height:17px;background:#121212;border:1px solid #262626;border-radius:3px"></div>
<div class="a" style="left:1482px;top:762px;width:434px;height:26px;background:#2f2f2f"></div>
<div class="a" style="left:1482px;top:788px;width:434px;height:1px;background:#1a1a1a"></div>
<svg style="left:1487px;top:772px" width="11" height="7" viewBox="0 0 11 7"><path d="M0 0h11l-5.5 7z" fill="#8a8a8a"/></svg>
<div class="t" style="left:1504px;top:771px;font-size:11px;font-weight:bold;color:#d8d8d8">Events</div>
<div class="a" style="left:1482px;top:789px;width:434px;height:26px;background:#242424"></div>
<div class="a" style="left:1482px;top:815px;width:434px;height:1px;background:#1a1a1a"></div>
<div class="a" style="left:1640px;top:789px;width:1px;height:27px;background:#1a1a1a"></div>
<div class="a" style="left:1877px;top:789px;width:1px;height:27px;background:#1a1a1a"></div>
<div class="t" style="left:1525px;top:797px;font-size:11px;color:#c0c0c0;width:115px;overflow:hidden">On Component Activated</div>
<svg style="left:1504px;top:795px" width="15" height="15" viewBox="0 0 15 15"><path d="M7.5 1l6.5 6.5l-6.5 6.5l-6.5 -6.5z" fill="none" stroke="#e8e8e8" stroke-width="1.6"/><path d="M5 5l2.5 2.5l-2.5 2.5z" fill="#e8e8e8"/><path d="M7.5 3.5l4 4l-4 4z" fill="#e8e8e8"/></svg>
<div class="a" style="left:1652px;top:793px;width:150px;height:19px;background:#4caa50;border-radius:2px"></div>
<svg style="left:1720px;top:797px" width="12" height="12" viewBox="0 0 12 12"><path d="M6 0.5v11M0.5 6h11" stroke="#fff" stroke-width="2.6"/></svg>
<div class="a" style="left:1482px;top:816px;width:434px;height:26px;background:#242424"></div>
<div class="a" style="left:1482px;top:842px;width:434px;height:1px;background:#1a1a1a"></div>
<div class="a" style="left:1640px;top:816px;width:1px;height:27px;background:#1a1a1a"></div>
<div class="a" style="left:1877px;top:816px;width:1px;height:27px;background:#1a1a1a"></div>
<div class="t" style="left:1525px;top:824px;font-size:11px;color:#c0c0c0;width:115px;overflow:hidden">On Component Deactivated</div>
<svg style="left:1504px;top:822px" width="15" height="15" viewBox="0 0 15 15"><path d="M7.5 1l6.5 6.5l-6.5 6.5l-6.5 -6.5z" fill="none" stroke="#e8e8e8" stroke-width="1.6"/><path d="M5 5l2.5 2.5l-2.5 2.5z" fill="#e8e8e8"/><path d="M7.5 3.5l4 4l-4 4z" fill="#e8e8e8"/></svg>
<div class="a" style="left:1652px;top:820px;width:150px;height:19px;background:#4caa50;border-radius:2px"></div>
<svg style="left:1720px;top:824px" width="12" height="12" viewBox="0 0 12 12"><path d="M6 0.5v11M0.5 6h11" stroke="#fff" stroke-width="2.6"/></svg>
<div class="a" style="left:1482px;top:843px;width:434px;height:26px;background:#2f2f2f"></div>
<div class="a" style="left:1482px;top:869px;width:434px;height:1px;background:#1a1a1a"></div>
<svg style="left:1489px;top:851px" width="7" height="11" viewBox="0 0 7 11"><path d="M0 0v11l7 -5.5z" fill="#8a8a8a"/></svg>
<div class="t" style="left:1504px;top:852px;font-size:11px;font-weight:bold;color:#d8d8d8">Asset User Data</div>
<div class="a" style="left:1482px;top:870px;width:434px;height:26px;background:#2f2f2f"></div>
<div class="a" style="left:1482px;top:896px;width:434px;height:1px;background:#1a1a1a"></div>
<svg style="left:1489px;top:878px" width="7" height="11" viewBox="0 0 7 11"><path d="M0 0v11l7 -5.5z" fill="#8a8a8a"/></svg>
<div class="t" style="left:1504px;top:879px;font-size:11px;font-weight:bold;color:#d8d8d8">Collision</div>
<div class="a" style="left:1525px;top:420px;width:313px;height:47px;background:#efefef;border:1px solid #1a1a1a;box-shadow:0 0 0 1px #bdbdbd inset"></div>
<div class="t" style="left:1534px;top:431px;font-size:12px;color:#141414">Physmat Data:</div>
<div class="t" style="left:1534px;top:445px;font-size:12px;color:#141414">Create alternate Data Tables for monsters, animals, etc</div>
<div class="a" style="left:204px;top:883px;width:1273px;height:161px;background:#1c1c1c"></div>
<div class="a" style="left:204px;top:858px;width:160px;height:26px;background:#242424;border-radius:5px 5px 0 0"></div>
<svg style="left:211px;top:862px" width="14" height="16" viewBox="0 0 14 16"><path d="M1 2h2v-1.5h2v1.5h4v-1.5h2v1.5h2v13h-12z" fill="#cfcfcf"/><path d="M3 7l3 2.5l-3 2.5M7 12.5h4" stroke="#242424" stroke-width="1.4" fill="none"/></svg>
<div class="t ptab" style="left:231px;top:864px;color:#c8c8c8">Compiler Results</div>
<div class="t" style="left:342px;top:864px;font-size:12px;color:#cfcfcf">✕</div>
<div class="a" style="left:1388px;top:1008px;width:73px;height:20px;background:#383838;border-radius:3px"></div>
<div class="t" style="left:1405px;top:1012px;font-size:12px;color:#8a8a8a">CLEAR</div>
<div class="a" style="left:0;top:1048px;width:1920px;height:32px;background:#242424"></div>
<div class="a" style="left:131px;top:1048px;width:2px;height:32px;background:#151515"></div>
<div class="a" style="left:236px;top:1048px;width:2px;height:32px;background:#151515"></div>
<div class="a" style="left:603px;top:1048px;width:2px;height:32px;background:#151515"></div>
<div class="a" style="left:1763px;top:1048px;width:2px;height:32px;background:#151515"></div>
<svg style="left:10px;top:1056px" width="18" height="16" viewBox="0 0 18 16"><path d="M1 1h5l2 2h5v4h-12z" fill="#bdbdbd"/><path d="M1 5h12v9h-12z" fill="#a8a8a8"/><circle cx="12" cy="11" r="3.8" fill="#242424" stroke="#d8d8d8" stroke-width="1.4"/><path d="M9.5 13.5l-2.5 2.5" stroke="#d8d8d8" stroke-width="1.6"/></svg>
<div class="t" style="left:31px;top:1058px;font-size:13px;color:#c8c8c8">Content Drawer</div>
<svg style="left:145px;top:1056px" width="14" height="16" viewBox="0 0 14 16"><path d="M1 2h2v-1.5h2v1.5h4v-1.5h2v1.5h2v13h-12z" fill="#cfcfcf"/><path d="M3 7l3 2.5l-3 2.5M7 12.5h4" stroke="#242424" stroke-width="1.4" fill="none"/></svg>
<div class="t" style="left:163px;top:1058px;font-size:13px;color:#c8c8c8">Output Log</div>
<svg style="left:250px;top:1057px" width="17" height="14" viewBox="0 0 17 14"><rect x="0.8" y="0.8" width="15.4" height="12.4" fill="none" stroke="#cfcfcf" stroke-width="1.4"/><path d="M3 4l3 2.5l-3 2.5M8 10h5" stroke="#cfcfcf" stroke-width="1.3" fill="none"/></svg>
<div class="t" style="left:271px;top:1058px;font-size:13px;color:#c8c8c8">Cmd</div>
<svg style="left:303px;top:1061px" width="10" height="7" viewBox="0 0 10 7"><path d="M1 1l4 4l4 -4" stroke="#ccc" fill="none" stroke-width="1.4"/></svg>
<div class="a" style="left:327px;top:1054px;width:267px;height:20px;background:#0f0f0f;border:1px solid #2e2e2e;border-radius:3px"></div>
<div class="t" style="left:336px;top:1058px;font-size:12px;font-family:'Liberation Mono';color:#5a5a5a">Enter Console Command</div>
<svg style="left:1776px;top:1056px" width="15" height="15" viewBox="0 0 15 15"><circle cx="7.5" cy="7.5" r="6.3" fill="none" stroke="#d0d0d0" stroke-width="1.4"/><path d="M3.2 11.8l8.6 -8.6" stroke="#d0d0d0" stroke-width="1.4"/></svg>
<div class="t" style="left:1797px;top:1058px;font-size:13px;color:#c8c8c8">Source Control Off</div>


</div></body></html>
